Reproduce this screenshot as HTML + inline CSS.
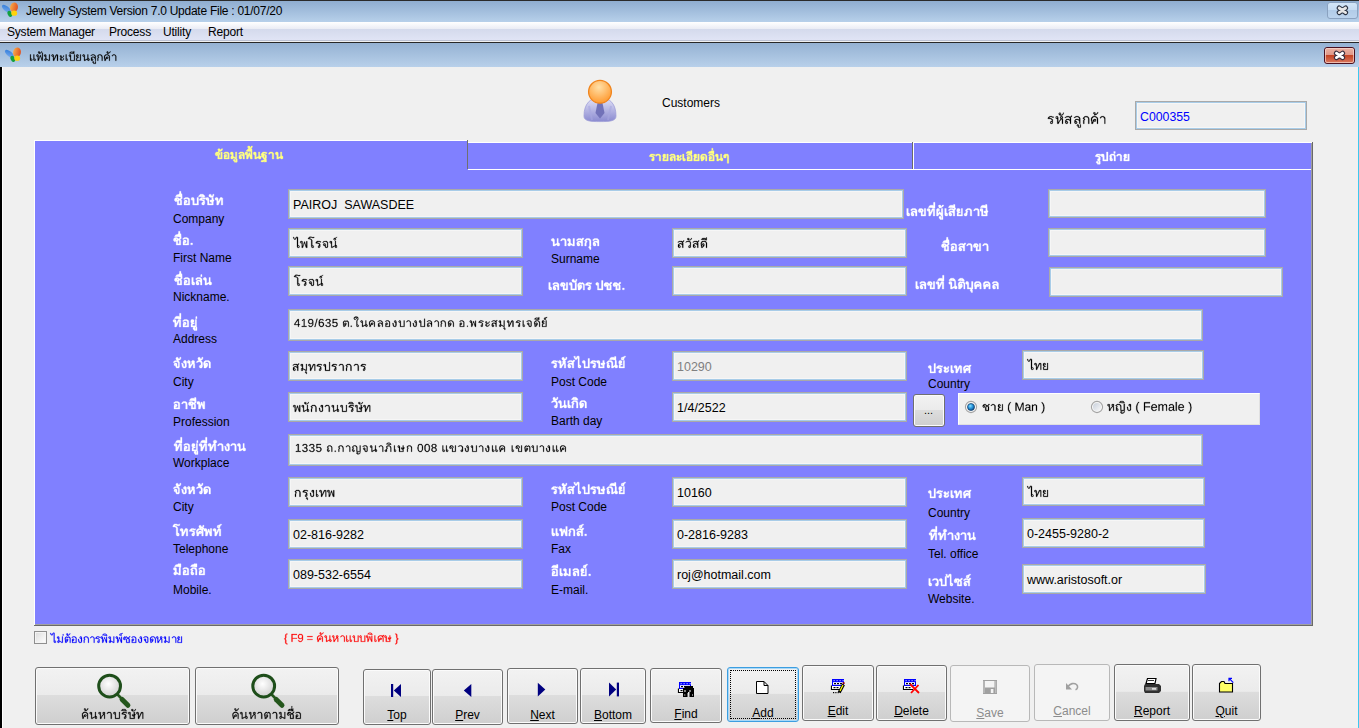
<!DOCTYPE html>
<html><head><meta charset="utf-8"><style>
*{box-sizing:border-box}
html,body{margin:0;padding:0}
body{width:1359px;height:728px;overflow:hidden;position:relative;background:#f0f0f0;font-family:"Liberation Sans",sans-serif;font-size:12px;color:#000}
.a{position:absolute;white-space:nowrap;line-height:20px}
.th{color:#fff;font-weight:bold;font-size:13px}
.en{font-size:12px}
.in{position:absolute;background:#f0f0f0;border:1px solid #a9a9a9;box-shadow:inset 0 0 0 1px #a8cce8,inset 0 0 0 2px #f6f6f6}
.it{position:absolute;white-space:nowrap;line-height:20px;font-size:12.5px}
.btn{position:absolute;border:1px solid #707070;border-radius:3px;background:linear-gradient(#f2f2f2 0,#ebebeb 48%,#dddddd 49%,#cfcfcf 100%);box-shadow:inset 0 0 0 1px #fbfbfb}
.bl{position:absolute;white-space:nowrap;line-height:20px;font-size:12px;text-align:center}
.bt{font-size:12.5px}
.u{text-decoration:underline}
</style></head><body>
<div style="position:absolute;left:0px;top:0px;width:1359px;height:1px;background:#2a2a2a"></div>
<div style="position:absolute;left:0px;top:1px;width:1359px;height:21px;background:linear-gradient(#8fadd0,#b7d0ea)"></div>
<div class="a a" style="left:26px;top:1px;font-size:12px;letter-spacing:-0.26px">Jewelry System Version 7.0 Update File : 01/07/20</div>
<div style="position:absolute;left:0px;top:22px;width:1359px;height:18px;background:linear-gradient(#ffffff 0px,#eaecf5 7px,#d4daec 7px,#e0e4f5 18px)"></div>
<div style="position:absolute;left:0px;top:40px;width:1359px;height:1px;background:#bcc2d4"></div>
<div style="position:absolute;left:0px;top:41px;width:1359px;height:1px;background:#f0f0f0"></div>
<div class="a a" style="left:7px;top:22px;font-size:12px;letter-spacing:-0.2px">System Manager</div>
<div class="a a" style="left:109px;top:22px;font-size:12px;letter-spacing:-0.2px">Process</div>
<div class="a a" style="left:163px;top:22px;font-size:12px;letter-spacing:-0.2px">Utility</div>
<div class="a a" style="left:208px;top:22px;font-size:12px;letter-spacing:-0.2px">Report</div>
<div style="position:absolute;left:0px;top:42px;width:1359px;height:1px;background:#282828"></div>
<div style="position:absolute;left:0px;top:43px;width:1359px;height:24px;background:linear-gradient(#95b2d3,#b8d0ea)"></div>
<svg style="position:absolute;left:29.25px;top:48.0px;overflow:visible" width="1" height="1"><path transform="scale(.25)" fill="#000" stroke="#000" stroke-width="0.9" stroke-linejoin="round" fill-rule="evenodd" d="M254 55 254 58 258 61 258 63 267 63 267 54 264 54 264 61 263 62 260 60 260 55 259 54 255 54ZM255 56 257 55 258 58 256 59ZM124 47 128 50 134 50 139 46 140 41 138 41 137 45 133 48 130 47 131 44 129 41 125 41 124 42ZM125 44 127 42 129 45 127 46ZM124 36 128 39 134 39 139 35 140 30 138 30 137 34 133 37 130 36 131 33 129 30 125 30 124 31ZM125 33 127 31 129 32 128 35ZM335 27 331 32 333 33 339 28 343 29 345 31 346 34 346 51 349 51 349 33 348 30 343 26 337 26ZM305 27 301 31 301 34 300 35 301 43 302 44 302 51 307 51 307 48 310 42 311 43 315 43 317 40 317 37 315 35 311 35 308 37 306 43 305 44 304 43 304 33 308 29 311 28 316 29 320 34 320 51 323 51 323 33 321 29 316 26 307 26ZM311 38 314 37 315 40 312 41ZM276 28 273 32 273 33 277 36 274 40 274 51 277 51 277 41 280 37 277 32 280 29 283 28 284 29 287 29 290 32 290 36 291 37 291 51 294 51 294 35 292 29 287 26 280 26ZM249 28 247 30 247 32 252 29 257 28 260 29 263 32 264 36 263 37 259 35 253 35 248 39 248 49 250 51 256 50 257 47 255 43 252 43 251 40 253 38 257 37 262 40 264 45 264 51 267 51 267 34 265 29 260 26 253 26ZM251 46 254 45 255 48 252 49ZM216 26 214 29 214 31 216 34 219 34 220 35 220 51 224 51 232 46 234 47 234 49 236 51 240 51 242 48 242 45 241 43 237 40 237 26 234 26 234 42 225 47 223 46 223 29 221 26ZM238 44 240 47 238 49 237 48 237 45ZM216 29 219 28 220 31 217 32ZM191 26 189 29 189 35 192 39 189 42 189 51 207 51 207 26 204 26 204 48 203 49 194 49 192 47 192 43 195 40 198 40 199 38 196 38 192 35 198 33 198 28 196 26ZM192 30 194 28 196 29 195 32ZM162 26 159 30 161 34 164 34 165 35 165 51 183 51 183 26 180 26 180 48 179 49 170 49 168 47 168 28 166 26ZM161 30 163 28 166 30 164 32ZM147 26 147 49 149 51 153 51 155 49 155 45 154 43 151 43 150 42 150 26ZM150 45 152 44 154 46 154 48 151 49 150 48ZM92 26 90 29 90 31 92 34 95 34 96 35 96 51 100 51 101 50 102 46 106 39 106 37 111 29 112 30 112 51 116 51 116 30 114 26 109 26 107 28 100 44 99 43 99 29 98 27 96 26ZM92 30 94 28 96 29 95 32 93 32ZM61 27 60 30 61 33 66 35 66 41 62 44 62 49 64 51 68 51 69 50 69 47 71 46 79 51 83 51 83 26 80 26 80 47 79 48 69 42 69 28 67 26ZM65 44 66 45 66 48 65 49 64 48 64 45ZM62 30 64 28 66 29 65 32ZM18 26 18 48 20 51 24 51 26 50 27 46 25 43 22 43 21 42 21 26ZM23 44 25 46 24 49 21 48 21 46ZM4 26 4 48 5 50 7 51 11 51 13 49 13 45 11 43 8 43 7 42 7 26ZM9 44 11 45 11 48 10 49 7 48 7 46ZM55 19 52 19 52 42 51 43 46 28 44 29 41 40 39 42 38 41 38 28 36 26 32 26 30 28 30 33 35 35 35 51 39 51 40 50 41 44 45 34 47 37 51 51 55 51ZM32 29 34 28 36 31 33 32ZM310 17 311 19 314 20 312 23 316 23 321 21 326 16 326 14 324 14 323 16 318 20 316 14 312 14ZM312 16 314 15 315 17 313 18ZM36 17 37 19 40 20 38 23 42 23 47 21 52 16 52 14 50 14 49 16 44 20 42 14 38 14ZM38 16 40 15 41 17 39 18ZM181 13 178 13 178 16 177 17 174 15 168 15 164 17 161 21 181 23ZM166 19 169 17 173 17 177 20 175 21 174 20 167 20Z"/></svg>
<div style="position:absolute;left:0px;top:67px;width:2px;height:661px;background:#000"></div>
<div style="position:absolute;left:2px;top:67px;width:1px;height:661px;background:#fff"></div>
<div style="position:absolute;left:1358px;top:67px;width:1px;height:661px;background:#3cc8f0"></div>
<div class="a a" style="left:662px;top:93px;font-size:12px">Customers</div>
<svg style="position:absolute;left:1047.25px;top:109.0px;overflow:visible" width="1" height="1"><path transform="scale(.25)" fill="#000" stroke="#000" stroke-width="0.9" stroke-linejoin="round" fill-rule="evenodd" d="M120 63 119 67 124 70 124 74 135 74 135 62 132 62 132 71 131 72 128 72 127 71 127 64 125 62 121 62ZM121 65 123 64 124 67 122 68ZM215 31 213 33 212 37 215 37 215 36 220 32 224 32 229 36 229 39 230 40 230 59 233 59 233 36 231 32 226 29 219 29ZM181 31 178 34 176 39 176 45 178 50 178 59 184 59 186 50 187 49 189 50 194 50 196 47 196 42 194 40 189 40 186 42 184 45 183 51 182 52 181 51 180 39 185 33 188 32 192 32 198 35 200 39 200 59 204 59 204 39 202 34 195 29 185 29ZM189 44 190 43 193 43 194 46 193 47 190 47ZM148 31 143 38 148 41 145 46 145 59 149 59 149 46 152 42 151 39 150 39 148 36 154 32 161 33 164 36 165 39 165 59 169 59 169 39 166 32 161 29 153 29ZM110 32 108 34 109 36 118 32 122 32 125 33 129 38 129 42 128 43 124 40 116 40 114 41 110 46 110 56 113 59 118 59 120 57 121 54 120 51 118 49 115 49 114 46 118 43 122 43 125 44 129 49 129 59 133 59 133 38 131 33 125 29 116 29ZM113 54 115 52 118 53 118 55 116 57ZM36 30 35 31 35 37 37 39 40 39 41 40 41 59 47 59 47 57 51 49 58 41 60 42 60 59 64 59 64 42 62 39 64 34 63 31 61 29 56 29 54 30 53 32 53 37 55 39 46 52 45 51 45 34 44 31 42 29ZM56 33 59 32 61 35 59 37 57 37 56 36ZM40 31 42 34 39 37 37 35 37 33ZM11 29 5 33 3 39 14 40 19 43 20 48 14 50 13 56 14 58 16 59 21 59 23 56 23 42 20 39 14 37 10 37 9 35 13 32 18 32 21 34 27 34 27 31 23 31 19 29ZM19 51 21 54 18 57 16 55 16 53ZM100 27 96 27 93 32 88 29 79 29 71 34 72 36 78 33 85 32 88 33 92 38 92 42 91 43 87 40 80 40 77 41 73 46 73 56 76 59 81 59 84 55 83 51 81 49 78 49 77 48 77 46 82 43 88 44 92 49 92 59 96 59 96 38 95 37 95 34 99 31ZM76 54 78 52 81 53 81 55 79 57ZM47 21 48 23 52 26 60 26 65 22 67 15 64 15 64 18 60 23 55 23 54 22 56 20 54 15 49 15 47 17ZM49 20 50 17 52 17 54 19 52 21ZM188 25 192 25 199 22 203 18 205 13 202 13 200 17 195 21 193 20 194 19 193 14 187 13 185 17 187 20 190 21 190 22 188 23ZM187 16 190 15 191 17 189 19Z"/></svg>
<div class="in" style="left:1135px;top:101px;width:172px;height:29px"></div>
<div class="a a" style="left:1140px;top:107px;font-size:12.3px;color:#0000ff">C000355</div>
<div style="position:absolute;left:34px;top:140px;width:434px;height:1px;background:#fff"></div>
<div style="position:absolute;left:34px;top:140px;width:1px;height:485px;background:#fff"></div>
<div style="position:absolute;left:35px;top:141px;width:1276px;height:483px;background:#8080ff"></div>
<div style="position:absolute;left:1311px;top:143px;width:1px;height:481px;background:#a0a0a0"></div>
<div style="position:absolute;left:1312px;top:142px;width:1px;height:484px;background:#696969"></div>
<div style="position:absolute;left:35px;top:624px;width:1277px;height:1px;background:#a0a0a0"></div>
<div style="position:absolute;left:34px;top:625px;width:1279px;height:1px;background:#696969"></div>
<div style="position:absolute;left:467px;top:140px;width:846px;height:2px;background:#f0f0f0"></div>
<div style="position:absolute;left:467px;top:140px;width:1px;height:29px;background:#707070"></div>
<div style="position:absolute;left:468px;top:142px;width:844px;height:1px;background:#fff"></div>
<div style="position:absolute;left:468px;top:169px;width:843px;height:1px;background:#fff"></div>
<div style="position:absolute;left:912px;top:142px;width:1px;height:27px;background:#6a6a6a"></div>
<div style="position:absolute;left:913px;top:143px;width:1px;height:26px;background:#fff"></div>
<svg style="position:absolute;left:215.25px;top:145.0px;overflow:visible" width="1" height="1"><path transform="scale(.25)" fill="#ffff80" stroke="#ffff80" stroke-width="1.2" stroke-linejoin="round" fill-rule="evenodd" d="M244 28 241 32 241 36 244 39 247 40 247 56 253 56 259 52 261 52 264 56 270 56 272 53 272 47 271 45 267 42 267 28 262 28 262 45 255 49 253 48 253 33 252 30 250 28ZM218 29 214 34 214 36 215 37 218 37 222 33 227 33 229 36 229 56 235 56 235 35 234 32 229 28 220 28ZM154 30 153 36 156 39 159 40 159 56 165 56 171 52 173 52 176 56 182 56 184 53 184 47 185 46 187 49 190 49 192 54 196 56 197 58 192 61 187 61 184 64 184 66 186 68 192 68 194 66 196 69 197 69 199 66 201 68 206 68 206 58 204 56 206 52 206 41 203 38 196 36 194 34 195 33 200 33 204 35 207 35 208 29 207 30 201 28 193 28 190 29 185 35 184 38 186 41 184 47 183 45 179 42 179 28 174 28 174 45 167 49 165 48 165 33 164 30 162 28 156 28ZM197 41 200 43 200 50 199 51 197 50 197 44 196 43ZM94 33 96 37 103 33 109 33 112 36 111 38 109 37 104 37 99 39 96 43 96 53 99 56 104 56 107 54 107 47 102 44 106 42 109 43 112 46 112 56 118 56 118 36 115 30 111 28 101 28ZM101 51 102 50 103 51 102 52ZM64 28 62 30 61 34 62 37 67 40 67 43 64 45 63 47 63 54 65 56 71 56 72 54 75 52 84 57 84 64 83 65 82 64 82 59 80 57 75 57 73 59 73 63 77 66 78 69 88 69 89 68 89 57 87 56 87 28 82 28 82 49 81 50 73 45 73 32 70 28ZM37 30 34 33 34 34 37 36 42 33 48 33 51 36 51 50 50 51 42 51 41 50 42 48 45 48 47 46 47 39 44 37 40 37 38 38 36 41 36 56 57 56 57 34 53 29 50 28 41 28ZM41 43 42 42 43 43 42 44ZM13 15 11 18 12 22 14 23 13 24 13 27 12 28 6 28 2 31 1 33 1 40 4 43 9 43 10 42 11 43 11 56 29 56 29 28 23 28 23 50 22 51 18 51 17 50 17 41 18 39 20 38 20 34 19 31 15 28 26 24 29 21 31 15 26 15 22 20 19 15ZM6 38 7 37 8 38 7 39ZM13 34 14 35 13 38 12 37ZM11 34 12 33 13 34 12 35ZM133 4 131 5 131 11 133 13 133 16 128 19 124 25 128 25 129 26 141 26 144 28 143 29 143 38 142 39 141 38 139 31 136 30 132 40 131 39 131 31 130 29 128 28 123 28 120 30 120 37 122 39 125 39 126 40 126 56 132 56 137 41 142 56 149 56 148 15 145 15 144 14 147 12 149 9 150 4 145 4 144 7 141 10 140 9 140 6 138 4ZM124 34 125 33 126 34 125 35ZM134 8 135 7 136 8 135 9Z"/></svg>
<svg style="position:absolute;left:648.5px;top:147.0px;overflow:visible" width="1" height="1"><path transform="scale(.25)" fill="#ffff80" stroke="#ffff80" stroke-width="1.2" stroke-linejoin="round" fill-rule="evenodd" d="M113 32 111 34 111 39 112 41 115 43 111 45 111 51 112 53 115 55 123 55 127 53 129 51 130 44 125 44 124 43 129 39 130 32 125 32 125 36 122 39 120 38 120 34 118 32ZM124 43 125 44 125 48 121 51 119 44 120 43ZM268 28 265 32 265 36 268 39 271 40 271 56 277 56 283 52 285 52 288 56 294 56 296 53 296 47 295 45 291 42 291 28 286 28 286 45 279 49 277 48 277 33 276 30 274 28ZM211 29 206 35 206 44 208 50 208 56 214 56 216 55 220 51 222 47 222 40 221 38 219 37 213 38 212 36 216 33 222 33 225 35 226 37 226 56 232 56 232 37 230 32 227 29 224 28 214 28ZM213 48 214 47 215 48 214 49ZM182 28 179 32 179 39 181 42 179 46 179 56 201 56 201 28 195 28 195 50 194 51 186 51 185 50 185 46 191 44 191 40 188 39 190 38 191 36 191 31 190 29 188 28ZM134 28 134 49 135 50 135 53 136 55 138 56 144 56 146 54 146 48 140 44 140 28ZM140 51 141 50 142 51 141 52ZM82 33 84 37 91 33 97 33 100 36 99 38 97 37 92 37 87 39 84 43 84 53 87 56 92 56 95 54 95 47 90 44 94 42 97 43 100 46 100 56 106 56 106 36 103 30 99 28 89 28ZM89 51 90 50 91 51 90 52ZM58 28 55 32 55 39 57 42 55 46 55 56 77 56 77 28 71 28 71 50 70 51 62 51 61 50 61 46 67 44 67 40 64 39 66 38 67 36 67 31 66 29 64 28ZM30 29 26 34 26 36 27 37 30 37 34 33 39 33 41 36 41 56 47 56 47 35 46 32 41 28 32 28ZM8 28 3 32 1 38 12 40 16 43 15 46 12 46 11 47 10 53 11 55 13 56 18 56 21 52 21 40 18 37 10 34 11 33 15 33 16 34 23 35 25 32 25 29 21 30 17 28ZM305 27 299 32 298 34 298 41 299 43 301 44 306 44 308 43 309 41 309 36 311 34 313 35 313 65 319 65 319 35 317 30 314 28 307 29ZM303 39 304 38 305 39 304 40ZM249 15 248 17 244 17 240 19 236 25 240 25 241 26 253 26 254 27 253 28 245 28 241 30 238 34 241 36 246 33 252 33 255 36 255 50 254 51 246 51 245 50 246 48 249 48 251 46 251 39 248 37 244 37 242 38 240 41 240 56 261 56 261 34 257 29 254 28 255 27 260 28 260 15ZM245 43 246 42 247 43 246 44ZM171 14 167 14 167 17 166 18 164 17 155 17 149 22 148 26 161 26 162 27 153 30 150 33 151 35 153 36 158 33 164 33 167 36 167 50 166 51 158 51 157 50 158 48 161 48 163 46 163 39 162 38 156 37 153 39 152 41 152 56 173 56 173 34 169 29 172 28 172 15ZM157 43 158 42 159 43 158 44ZM166 28 167 27 169 28 168 29ZM251 5 251 13 256 13 256 5Z"/></svg>
<svg style="position:absolute;left:1095.0px;top:147.0px;overflow:visible" width="1" height="1"><path transform="scale(.25)" fill="#ffffff" stroke="#ffffff" stroke-width="1.2" stroke-linejoin="round" fill-rule="evenodd" d="M118 28 115 32 115 39 117 42 115 46 115 56 137 56 137 28 131 28 131 50 130 51 122 51 121 50 121 46 127 44 127 40 124 39 126 38 127 36 127 31 126 29 124 28ZM90 29 86 34 86 36 87 37 90 37 94 33 99 33 101 36 101 56 107 56 107 35 106 32 101 28 92 28ZM62 30 57 37 61 39 59 43 59 52 62 56 68 56 70 54 71 49 68 45 65 44 68 40 65 35 68 33 73 33 76 36 76 56 82 56 82 35 79 30 75 28 66 28ZM64 51 65 50 66 51 65 52ZM52 20 46 20 46 50 45 51 38 51 37 50 37 34 36 33 36 30 34 28 28 28 23 30 17 28 8 28 3 32 1 38 12 40 16 43 16 45 15 46 12 46 10 49 10 53 11 55 13 56 12 57 7 57 5 59 5 63 9 66 10 69 20 69 21 68 21 57 18 56 21 52 21 40 18 37 11 35 10 34 11 33 15 33 20 35 23 35 24 34 26 38 31 40 31 56 52 56ZM13 56 16 57 16 64 15 65 14 64 14 59 12 57ZM75 18 75 25 76 26 80 26 81 25 81 18Z"/></svg>
<svg style="position:absolute;left:173.5px;top:191.0px;overflow:visible" width="1" height="1"><path transform="scale(.25)" fill="#fff" stroke="#fff" stroke-width="1.2" stroke-linejoin="round" fill-rule="evenodd" d="M165 28 164 30 165 35 167 37 170 37 171 38 171 56 177 56 188 33 189 34 189 56 195 56 195 29 192 26 186 26 184 28 178 41 176 37 177 35 176 29 173 26 168 26ZM169 32 170 31 171 32 170 33ZM70 27 69 29 69 35 71 37 74 37 75 38 75 56 98 56 98 26 92 26 92 50 91 51 82 51 81 50 81 32 79 27 77 26 72 26ZM73 32 74 31 75 32 74 33ZM42 28 38 32 41 35 43 33 48 31 53 31 56 33 57 35 57 50 56 51 47 51 46 50 47 47 50 47 52 45 53 41 51 37 49 36 44 36 41 39 41 42 40 43 40 56 63 56 63 33 61 29 55 26 46 26ZM46 41 47 40 48 41 47 42ZM160 13 156 13 155 14 155 17 152 20 150 20 149 19 150 18 149 15 145 13 141 14 139 18 140 19 140 22 142 24 148 26 150 25 151 26 151 35 150 36 146 36 144 37 143 39 145 44 151 46 151 50 150 51 141 51 140 50 140 31 137 26 131 26 129 27 128 29 127 27 123 28 118 26 110 26 103 31 101 37 110 38 116 40 117 41 117 44 112 46 111 48 111 53 114 56 120 56 123 50 123 40 121 37 118 35 113 34 112 32 113 31 116 31 120 33 125 33 127 29 128 30 128 35 134 39 134 56 157 56 157 43 160 40 160 37 161 36 157 34 157 26 154 26 153 25 157 23 159 20ZM116 50 117 49 118 51 117 52ZM132 32 133 31 134 32 133 33ZM98 21 98 23 113 23 114 24 124 25 122 18 116 13 106 13 104 14ZM110 18 111 17 113 18 112 19ZM27 1 23 1 22 2 22 10 20 11 18 14 11 15 6 22 7 23 21 23 22 24 26 24 27 25 27 28 22 31 16 26 8 26 3 30 2 33 2 38 5 42 11 42 12 41 13 42 13 56 31 56 31 38 28 34 33 30 32 11 29 11 28 10 28 2ZM22 37 25 39 25 50 24 51 20 51 19 50 19 40ZM7 36 8 35 9 37 8 38ZM12 32 14 31 16 33 16 35 15 36Z"/></svg>
<svg style="position:absolute;left:173.25px;top:230.5px;overflow:visible" width="1" height="1"><path transform="scale(.25)" fill="#fff" stroke="#fff" stroke-width="1.2" stroke-linejoin="round" fill-rule="evenodd" d="M71 48 71 55 78 55 78 48ZM42 28 38 32 41 35 43 33 48 31 53 31 56 33 57 35 57 50 56 51 47 51 46 50 47 47 50 47 52 45 53 41 51 37 49 36 44 36 41 39 41 42 40 43 40 56 63 56 63 33 61 29 55 26 46 26ZM46 41 47 40 48 41 47 42ZM27 1 23 1 22 2 22 10 20 11 18 14 11 15 6 22 7 23 21 23 22 24 26 24 27 25 27 28 22 31 16 26 8 26 3 30 2 33 2 38 5 42 11 42 12 41 13 42 13 56 31 56 31 38 28 34 33 30 32 11 29 11 28 10 28 2ZM22 37 25 39 25 50 24 51 20 51 19 50 19 40ZM7 36 8 35 9 37 8 38ZM12 32 14 31 16 33 16 35 15 36Z"/></svg>
<svg style="position:absolute;left:173.5px;top:271.0px;overflow:visible" width="1" height="1"><path transform="scale(.25)" fill="#fff" stroke="#fff" stroke-width="1.2" stroke-linejoin="round" fill-rule="evenodd" d="M118 28 117 31 118 35 120 37 123 37 124 38 124 56 130 56 139 51 142 56 148 56 150 54 151 48 150 46 145 42 145 26 140 26 140 44 138 46 131 49 130 48 130 32 128 27 126 26 121 26ZM122 32 123 31 124 32 123 33ZM90 28 87 31 87 33 89 36 96 31 101 31 106 35 105 37 103 36 95 36 90 39 88 44 88 50 90 55 92 56 98 56 100 54 100 47 98 45 96 45 95 43 97 41 101 41 103 42 106 46 106 56 112 56 112 34 110 30 107 27 104 26 94 26ZM94 50 95 49 96 51 95 52ZM71 26 71 52 74 56 80 56 82 55 83 53 83 48 81 45 77 43 77 26ZM77 50 78 49 79 51 78 52ZM42 28 38 32 41 35 43 33 48 31 53 31 56 33 57 35 57 50 56 51 47 51 46 50 47 47 50 47 52 45 53 41 51 37 49 36 44 36 41 39 41 42 40 43 40 56 63 56 63 33 61 29 55 26 46 26ZM46 41 47 40 48 41 47 42ZM108 14 107 15 107 23 112 23 112 15 111 14ZM27 1 23 1 22 2 22 10 20 11 18 14 11 15 6 22 7 23 21 23 22 24 26 24 27 25 27 28 22 31 16 26 8 26 3 30 2 33 2 38 5 42 11 42 12 41 13 42 13 56 31 56 31 38 28 34 33 30 32 11 29 11 28 10 28 2ZM22 37 25 39 25 50 24 51 20 51 19 50 19 40ZM7 36 8 35 9 37 8 38ZM12 32 14 31 16 33 16 35 15 36Z"/></svg>
<svg style="position:absolute;left:173.25px;top:313.0px;overflow:visible" width="1" height="1"><path transform="scale(.25)" fill="#fff" stroke="#fff" stroke-width="1.2" stroke-linejoin="round" fill-rule="evenodd" d="M73 27 71 31 71 37 74 41 72 44 72 56 81 56 82 57 80 59 80 65 84 67 84 70 96 70 96 57 94 56 94 26 89 26 89 50 88 51 79 51 78 50 78 45 85 43 85 39 80 39 79 38 84 35 84 29 81 26 75 26ZM88 56 91 57 91 65 90 66 89 65 89 60 87 57ZM42 28 38 32 41 35 43 33 48 31 53 31 56 33 57 35 57 50 56 51 47 51 46 50 47 47 50 47 52 45 53 41 51 37 49 36 44 36 41 39 41 42 40 43 40 56 63 56 63 33 61 29 55 26 46 26ZM46 41 47 40 48 41 47 42ZM92 14 91 15 91 23 96 23 96 15 95 14ZM31 1 27 1 26 2 26 13 25 14 23 13 14 13 10 15 6 21 6 23 21 23 22 24 28 24 29 25 28 26 22 26 20 28 14 41 12 37 13 35 12 29 9 26 4 26 2 27 0 30 1 35 3 37 6 37 7 38 7 56 13 56 24 33 25 34 25 56 31 56 31 29 28 26 29 25 32 25 32 2ZM5 32 6 31 7 32 6 33Z"/></svg>
<svg style="position:absolute;left:173.0px;top:354.0px;overflow:visible" width="1" height="1"><path transform="scale(.25)" fill="#fff" stroke="#fff" stroke-width="1.2" stroke-linejoin="round" fill-rule="evenodd" d="M125 29 122 36 122 41 124 48 124 56 131 56 135 53 139 47 139 43 140 42 139 41 139 38 137 36 131 36 129 38 128 37 129 34 134 31 139 31 144 35 144 56 150 56 150 34 148 30 142 26 130 26ZM132 42 133 41 135 42 134 43ZM45 26 42 29 42 35 44 37 47 37 48 38 48 49 46 51 44 51 42 48 41 39 36 36 34 36 34 38 35 39 36 48 38 53 42 56 49 56 51 55 54 51 54 30 51 26ZM46 32 47 31 48 32 47 33ZM60 26 57 30 57 33 59 37 62 37 63 38 63 56 70 56 73 49 80 39 81 40 81 56 87 56 87 39 85 36 86 35 86 28 83 26 77 26 74 30 74 33 76 36 70 44 69 43 69 30 68 28 63 25ZM79 32 80 31 81 32 80 33ZM62 31 63 30 64 31 63 32ZM104 13 101 14 99 18 100 19 100 22 104 25 97 28 93 33 96 35 100 32 108 31 112 36 112 44 111 45 108 45 106 47 105 51 107 55 109 56 114 56 116 55 118 50 118 35 116 30 111 26 117 23 120 17 120 13 116 13 115 14 115 17 112 20 109 19 110 18 108 14ZM110 50 111 49 112 50 111 51ZM32 13 28 13 27 14 27 17 24 20 21 19 22 18 20 14 17 13 13 14 11 18 12 19 12 22 16 25 15 26 7 27 1 32 1 33 4 35 12 31 16 31 20 34 21 37 21 48 19 51 18 51 16 48 16 39 15 37 13 36 8 36 6 37 4 40 5 46 10 47 12 54 15 56 22 56 24 55 26 52 26 32 21 26 29 23 32 17ZM9 42 10 41 11 42 10 43Z"/></svg>
<svg style="position:absolute;left:173.0px;top:394.75px;overflow:visible" width="1" height="1"><path transform="scale(.25)" fill="#fff" stroke="#fff" stroke-width="1.2" stroke-linejoin="round" fill-rule="evenodd" d="M97 27 96 29 96 35 98 37 101 37 102 38 102 56 109 56 112 47 112 44 114 40 116 41 120 55 121 56 127 56 127 26 121 26 121 38 120 39 116 28 113 28 109 39 108 38 108 30 105 26 99 26ZM41 26 36 30 34 35 38 36 43 31 49 32 51 35 51 56 57 56 57 35 56 34 56 31 54 28 50 26ZM6 28 2 32 5 35 7 33 12 31 17 31 20 33 21 35 21 50 20 51 11 51 10 50 11 47 14 47 16 45 17 41 15 37 13 36 8 36 5 39 5 42 4 43 4 56 27 56 27 33 25 29 19 26 10 26ZM10 41 11 40 12 41 11 42ZM92 10 86 10 86 13 85 14 83 13 74 13 70 15 66 21 66 23 81 23 87 25 87 28 83 31 76 26 68 26 63 30 62 33 62 38 65 42 71 42 72 41 73 42 73 56 91 56 91 38 88 34 93 30ZM82 37 85 39 85 50 84 51 80 51 79 50 79 40ZM67 36 68 35 69 37 68 38ZM72 32 74 31 76 33 76 35 75 36Z"/></svg>
<svg style="position:absolute;left:173.5px;top:437.0px;overflow:visible" width="1" height="1"><path transform="scale(.25)" fill="#fff" stroke="#fff" stroke-width="1.2" stroke-linejoin="round" fill-rule="evenodd" d="M254 28 253 31 254 35 256 37 259 37 260 38 260 56 266 56 275 51 278 56 284 56 286 54 287 48 286 46 281 42 281 26 276 26 276 44 274 46 267 49 266 48 266 32 264 27 262 26 257 26ZM258 32 259 31 260 32 259 33ZM233 26 228 30 226 35 230 36 235 31 241 32 243 35 243 56 249 56 249 35 248 34 248 31 246 28 242 26ZM213 26 210 29 210 35 212 37 215 37 216 38 216 49 214 51 212 51 210 48 209 39 204 36 202 36 202 38 203 39 204 48 206 53 210 56 217 56 219 55 222 51 222 30 219 26ZM214 32 215 31 216 32 215 33ZM181 26 176 30 174 35 178 36 183 31 189 32 191 35 191 56 197 56 197 35 196 34 196 31 194 28 190 26ZM73 27 71 31 71 37 74 41 72 44 72 56 81 56 82 57 80 59 80 65 84 67 84 70 96 70 96 57 94 56 94 26 89 26 89 50 88 51 79 51 78 50 78 45 85 43 85 39 80 39 79 38 84 35 84 29 81 26 75 26ZM88 56 91 57 91 65 90 66 89 65 89 60 87 57ZM42 28 38 32 41 35 43 33 48 31 53 31 56 33 57 35 57 50 56 51 47 51 46 50 47 47 50 47 52 45 53 41 51 37 49 36 44 36 41 39 41 42 40 43 40 56 63 56 63 33 61 29 55 26 46 26ZM46 41 47 40 48 41 47 42ZM92 14 91 15 91 23 96 23 96 15 95 14ZM169 14 167 13 161 13 159 14 157 17 158 23 161 25 156 28 150 41 148 37 149 35 148 29 145 26 140 26 137 28 136 30 137 35 139 37 142 37 143 38 143 56 149 56 160 33 161 34 161 56 167 56 167 29 164 26 169 24 171 20 171 17ZM141 32 142 31 143 32 142 33ZM163 19 164 18 165 19 164 20ZM131 1 127 1 126 2 126 13 125 14 123 13 114 13 110 15 106 21 106 23 121 23 122 24 128 24 129 25 128 26 122 26 120 28 114 41 112 37 113 35 112 29 109 26 104 26 102 27 100 30 101 35 103 37 106 37 107 38 107 56 113 56 124 33 125 34 125 56 131 56 131 29 128 26 129 25 132 25 132 2ZM105 32 106 31 107 32 106 33ZM31 1 27 1 26 2 26 13 25 14 23 13 14 13 10 15 6 21 6 23 21 23 22 24 28 24 29 25 28 26 22 26 20 28 14 41 12 37 13 35 12 29 9 26 4 26 2 27 0 30 1 35 3 37 6 37 7 38 7 56 13 56 24 33 25 34 25 56 31 56 31 29 28 26 29 25 32 25 32 2ZM5 32 6 31 7 32 6 33Z"/></svg>
<svg style="position:absolute;left:173.0px;top:480.0px;overflow:visible" width="1" height="1"><path transform="scale(.25)" fill="#fff" stroke="#fff" stroke-width="1.2" stroke-linejoin="round" fill-rule="evenodd" d="M125 29 122 36 122 41 124 48 124 56 131 56 135 53 139 47 139 43 140 42 139 41 139 38 137 36 131 36 129 38 128 37 129 34 134 31 139 31 144 35 144 56 150 56 150 34 148 30 142 26 130 26ZM132 42 133 41 135 42 134 43ZM45 26 42 29 42 35 44 37 47 37 48 38 48 49 46 51 44 51 42 48 41 39 36 36 34 36 34 38 35 39 36 48 38 53 42 56 49 56 51 55 54 51 54 30 51 26ZM46 32 47 31 48 32 47 33ZM60 26 57 30 57 33 59 37 62 37 63 38 63 56 70 56 73 49 80 39 81 40 81 56 87 56 87 39 85 36 86 35 86 28 83 26 77 26 74 30 74 33 76 36 70 44 69 43 69 30 68 28 63 25ZM79 32 80 31 81 32 80 33ZM62 31 63 30 64 31 63 32ZM104 13 101 14 99 18 100 19 100 22 104 25 97 28 93 33 96 35 100 32 108 31 112 36 112 44 111 45 108 45 106 47 105 51 107 55 109 56 114 56 116 55 118 50 118 35 116 30 111 26 117 23 120 17 120 13 116 13 115 14 115 17 112 20 109 19 110 18 108 14ZM110 50 111 49 112 50 111 51ZM32 13 28 13 27 14 27 17 24 20 21 19 22 18 20 14 17 13 13 14 11 18 12 19 12 22 16 25 15 26 7 27 1 32 1 33 4 35 12 31 16 31 20 34 21 37 21 48 19 51 18 51 16 48 16 39 15 37 13 36 8 36 6 37 4 40 5 46 10 47 12 54 15 56 22 56 24 55 26 52 26 32 21 26 29 23 32 17ZM9 42 10 41 11 42 10 43Z"/></svg>
<svg style="position:absolute;left:173.25px;top:522.0px;overflow:visible" width="1" height="1"><path transform="scale(.25)" fill="#fff" stroke="#fff" stroke-width="1.2" stroke-linejoin="round" fill-rule="evenodd" d="M74 26 67 31 65 37 74 38 80 40 81 41 81 44 76 46 75 48 75 53 78 56 84 56 87 50 87 40 85 37 82 35 77 34 76 32 77 31 80 31 84 33 89 33 91 27 87 28 82 26ZM80 50 81 49 82 51 81 52ZM29 28 28 30 29 35 31 37 34 37 35 38 35 56 41 56 52 33 53 34 53 56 59 56 59 29 56 26 50 26 48 28 42 41 40 37 41 35 40 29 37 26 32 26ZM33 32 34 31 35 32 34 33ZM93 35 93 42 95 48 95 56 102 56 104 48 105 47 111 47 113 46 114 44 115 45 115 56 121 56 121 35 120 32 123 29 124 30 124 35 126 37 129 37 130 38 130 56 137 56 140 47 140 44 142 40 144 41 148 55 149 56 155 56 155 26 149 26 149 38 148 39 144 28 141 28 137 39 136 38 136 30 133 26 127 26 125 27 124 26 125 24 122 24 121 23 124 17 124 13 120 13 119 14 119 17 116 20 113 19 114 18 112 14 109 13 105 14 103 18 104 19 104 22 108 25 107 26 102 26 98 28ZM108 41 109 40 110 42 109 43ZM99 41 99 36 105 31 112 32 115 36 114 39 113 37 111 36 105 36 100 42ZM123 28 124 27 125 28 124 29ZM113 26 114 25 117 26 116 27ZM195 9 189 9 185 12 178 14 177 16 177 22 179 24 182 24 183 25 180 28 174 41 172 37 173 35 172 29 169 26 164 26 161 28 160 30 161 35 163 37 166 37 167 38 167 56 173 56 184 33 185 34 185 56 191 56 191 29 188 26 184 26 183 25 188 22 189 20 188 16 193 13ZM165 32 166 31 167 32 166 33ZM181 19 183 18 184 20 183 21ZM28 7 24 10 18 10 14 8 6 8 1 12 -1 19 2 20 8 20 10 21 13 25 13 52 16 56 22 56 24 55 25 53 25 48 23 45 19 43 19 25 18 22 15 18 9 16 8 14 9 13 12 13 17 15 24 15 27 13 27 8ZM19 50 20 49 21 51 20 52Z"/></svg>
<svg style="position:absolute;left:173.25px;top:561.0px;overflow:visible" width="1" height="1"><path transform="scale(.25)" fill="#fff" stroke="#fff" stroke-width="1.2" stroke-linejoin="round" fill-rule="evenodd" d="M106 28 102 32 105 35 107 33 112 31 117 31 120 33 121 35 121 50 120 51 111 51 110 50 111 47 114 47 116 45 117 41 115 37 113 36 108 36 105 39 105 42 104 43 104 56 127 56 127 33 125 29 119 26 110 26ZM110 41 111 40 112 41 111 42ZM75 28 69 36 74 38 71 46 72 53 75 56 81 56 83 54 84 49 81 45 78 44 78 42 81 38 77 34 81 31 85 31 87 32 90 36 90 56 96 56 96 35 94 30 89 26 79 26ZM77 50 78 49 79 51 78 52ZM42 28 38 32 41 35 43 33 48 31 53 31 56 33 57 35 57 50 56 51 47 51 46 50 47 47 50 47 52 45 53 41 51 37 49 36 44 36 41 39 41 42 40 43 40 56 63 56 63 33 61 29 55 26 46 26ZM46 41 47 40 48 41 47 42ZM70 22 71 23 85 23 86 24 96 25 96 11 84 11 82 14 75 15ZM32 11 20 11 18 14 11 15 6 22 7 23 21 23 28 25 27 26 24 26 24 49 23 50 14 44 14 31 13 28 10 26 5 26 2 28 2 35 4 37 7 37 8 38 8 43 3 47 3 52 6 56 11 56 13 55 15 51 24 56 30 56 30 26 32 25ZM6 32 7 31 8 32 7 33Z"/></svg>
<svg style="position:absolute;left:551.0px;top:231.75px;overflow:visible" width="1" height="1"><path transform="scale(.25)" fill="#fff" stroke="#fff" stroke-width="1.2" stroke-linejoin="round" fill-rule="evenodd" d="M170 28 167 31 167 33 169 36 176 31 181 31 186 35 185 37 183 36 175 36 170 39 168 44 168 50 170 55 172 56 178 56 180 54 180 47 178 45 176 45 175 43 177 41 181 41 183 42 186 46 186 56 192 56 192 34 190 30 187 27 184 26 174 26ZM174 50 175 49 176 51 175 52ZM143 26 139 28 133 36 138 38 135 46 135 56 141 56 141 44 145 39 141 34 145 31 151 32 154 36 154 56 151 59 151 64 155 67 155 70 160 70 160 60 158 57 160 56 160 35 158 30 153 26ZM66 28 66 35 68 37 71 37 72 38 72 43 67 47 67 52 70 56 75 56 77 55 79 51 88 56 94 56 94 26 88 26 88 49 87 50 78 44 78 31 77 28 74 26 69 26ZM70 32 71 31 72 32 71 33ZM45 26 40 30 38 35 42 36 47 31 53 32 55 35 55 56 61 56 61 35 60 34 60 31 58 28 54 26ZM2 28 1 31 2 35 4 37 7 37 8 38 8 56 14 56 23 51 26 56 32 56 34 54 35 48 34 46 29 42 29 26 24 26 24 44 22 46 15 49 14 48 14 32 12 27 10 26 5 26ZM6 32 7 31 8 32 7 33ZM131 24 125 24 125 26 123 28 119 26 109 26 102 31 102 33 104 36 107 33 112 31 116 31 121 35 120 37 119 36 110 36 106 38 103 44 103 49 104 50 104 53 107 56 113 56 115 54 116 51 115 47 110 43 112 41 116 41 120 44 121 46 121 56 127 56 127 34 126 33 129 31 131 27ZM109 50 110 49 111 51 110 52Z"/></svg>
<svg style="position:absolute;left:547.5px;top:275.75px;overflow:visible" width="1" height="1"><path transform="scale(.25)" fill="#fff" stroke="#fff" stroke-width="1.2" stroke-linejoin="round" fill-rule="evenodd" d="M298 48 298 55 305 55 305 48ZM158 26 151 31 149 37 158 38 164 40 165 41 165 44 160 46 159 48 159 53 162 56 168 56 171 50 171 40 169 37 166 35 161 34 160 32 161 31 164 31 168 33 173 33 175 27 171 28 166 26ZM164 50 165 49 166 51 165 52ZM124 27 120 31 118 37 119 39 119 45 120 46 120 56 127 56 131 53 135 47 136 44 135 38 133 36 128 36 127 37 125 36 128 32 131 34 134 34 136 32 138 32 140 34 141 37 141 56 146 56 146 33 145 31 139 26 136 26 133 28 130 26ZM129 42 130 41 131 42 130 43ZM124 37 125 36 126 38 125 39ZM53 27 49 33 49 38 52 42 58 42 59 41 60 42 60 56 79 56 79 26 73 26 73 50 72 51 67 51 66 50 66 41 70 36 68 29 63 26 55 26ZM54 36 55 35 56 37 55 38ZM59 32 61 31 64 35 62 37ZM22 28 19 31 19 33 21 36 28 31 33 31 38 35 37 37 35 36 27 36 22 39 20 44 20 50 22 55 24 56 30 56 32 54 32 47 30 45 28 45 27 43 29 41 33 41 35 42 38 46 38 56 44 56 44 34 42 30 39 27 36 26 26 26ZM26 50 27 49 28 51 27 52ZM3 26 3 52 6 56 12 56 14 55 15 53 15 48 13 45 9 43 9 26ZM9 50 10 49 11 51 10 52ZM291 25 285 25 285 28 281 31 274 26 266 26 261 30 260 33 260 38 263 42 269 42 270 41 271 42 271 56 289 56 289 38 286 34 291 30ZM280 37 283 39 283 50 282 51 278 51 277 50 277 40ZM265 36 266 35 267 37 266 38ZM270 32 272 31 274 33 274 35 273 36ZM255 25 249 25 249 28 245 31 238 26 230 26 225 30 224 33 224 38 227 42 233 42 234 41 235 42 235 56 253 56 253 38 250 34 255 30ZM244 37 247 39 247 50 246 51 242 51 241 50 241 40ZM229 36 230 35 231 37 230 38ZM234 32 236 31 238 33 238 35 237 36ZM220 18 214 18 214 50 213 51 204 51 203 50 203 29 200 26 195 26 192 28 191 30 192 36 198 38 198 56 220 56ZM196 32 197 31 198 32 197 33ZM97 14 95 18 96 19 96 22 100 25 103 25 104 26 107 25 108 26 108 50 107 51 98 51 97 50 97 32 95 27 93 26 88 26 86 27 85 29 85 35 87 37 90 37 91 38 91 56 114 56 114 26 110 26 109 25 113 23 115 20 116 13 112 13 111 14 111 17 108 20 105 19 106 18 104 14 101 13ZM89 32 90 31 91 32 90 33Z"/></svg>
<svg style="position:absolute;left:551.25px;top:354.0px;overflow:visible" width="1" height="1"><path transform="scale(.25)" fill="#fff" stroke="#fff" stroke-width="1.2" stroke-linejoin="round" fill-rule="evenodd" d="M273 27 271 31 271 37 274 41 272 44 272 56 294 56 294 26 289 26 289 50 288 51 279 51 278 50 278 45 285 43 285 39 280 39 279 38 284 35 284 29 281 26 275 26ZM158 33 157 37 166 38 173 41 173 44 172 45 169 45 167 48 167 53 170 56 176 56 179 50 179 40 177 37 174 35 169 34 168 32 169 31 172 31 176 33 181 33 183 29 184 30 184 35 190 39 190 56 213 56 213 43 216 40 216 37 217 36 213 34 213 26 207 26 207 35 206 36 202 36 200 37 199 39 201 44 207 46 207 50 206 51 197 51 196 50 196 31 193 26 187 26 185 27 184 29 183 27 179 28 174 26 166 26 162 28ZM172 50 173 49 174 51 173 52ZM188 32 189 31 190 32 189 33ZM10 26 3 31 1 37 10 38 16 40 17 41 17 44 12 46 11 48 11 53 14 56 20 56 23 50 23 40 21 37 18 35 13 34 12 32 13 31 16 31 20 33 25 33 27 27 23 28 18 26ZM16 50 17 49 18 51 17 52ZM95 24 89 24 89 26 87 28 83 26 73 26 66 31 66 33 68 36 71 33 76 31 80 31 85 35 84 37 83 36 74 36 70 38 67 44 67 49 68 50 68 53 71 56 77 56 79 54 80 51 79 47 74 43 76 41 80 41 84 44 85 46 85 56 91 56 91 34 90 33 93 31 95 27ZM73 50 74 49 75 51 74 52ZM154 18 148 18 148 50 147 51 138 51 137 50 137 29 134 26 129 26 126 28 125 30 126 36 132 38 132 56 154 56ZM130 32 131 31 132 32 131 33ZM64 13 60 13 59 14 59 17 56 20 53 19 54 18 52 14 48 13 44 15 43 18 44 19 44 22 49 26 46 30 46 33 48 36 42 44 41 43 41 30 40 28 35 25 30 28 29 30 30 36 35 38 35 56 42 56 45 49 52 39 53 40 53 56 59 56 59 39 57 36 58 35 58 28 55 26 61 23 64 17ZM51 32 52 31 53 32 52 33ZM34 31 35 30 36 31 35 32ZM260 10 254 10 254 13 253 14 251 13 242 13 238 15 234 21 234 23 249 23 250 24 256 24 257 25 256 26 256 44 249 49 248 48 248 35 246 30 241 26 231 26 225 30 222 35 222 37 224 37 226 39 224 42 224 53 227 56 233 56 236 51 235 46 230 43 233 39 229 34 233 31 239 32 242 36 242 56 248 56 255 51 257 55 259 56 264 56 266 54 267 51 266 46 262 43 262 27 260 25ZM229 50 230 49 231 51 230 52ZM299 9 293 9 289 12 282 14 281 16 281 22 283 24 286 24 287 25 290 24 293 20 292 16 297 13ZM285 19 287 18 288 20 287 21ZM91 9 92 14 97 22 102 22 104 21 106 18 106 16 107 15 108 16 108 53 111 56 117 56 120 52 120 49 118 45 113 43 113 11 112 9 110 8 104 9 100 17 98 15 97 9ZM113 51 114 49 116 50 114 52Z"/></svg>
<svg style="position:absolute;left:551.25px;top:394.0px;overflow:visible" width="1" height="1"><path transform="scale(.25)" fill="#fff" stroke="#fff" stroke-width="1.2" stroke-linejoin="round" fill-rule="evenodd" d="M117 29 114 36 114 41 116 48 116 56 123 56 127 53 131 47 131 43 132 42 131 41 131 38 129 36 123 36 121 38 120 37 121 34 126 31 131 31 136 35 136 56 142 56 142 34 140 30 134 26 122 26ZM124 42 125 41 127 42 126 43ZM87 28 81 36 86 38 83 46 83 56 89 56 89 44 93 39 89 34 93 31 97 31 101 34 102 36 102 56 108 56 108 35 106 30 101 26 91 26ZM67 26 67 52 70 56 76 56 78 55 79 53 79 48 77 45 73 43 73 26ZM73 50 74 49 75 51 74 52ZM30 28 29 31 30 35 32 37 35 37 36 38 36 56 42 56 51 51 54 56 60 56 62 54 63 48 62 46 57 42 57 26 52 26 52 44 50 46 43 49 42 48 42 32 40 27 38 26 33 26ZM34 32 35 31 36 32 35 33ZM82 21 82 23 97 23 98 24 108 25 106 18 100 13 90 13 88 14ZM94 18 95 17 97 18 96 19ZM12 13 9 14 7 18 8 19 8 22 12 25 5 28 1 33 4 35 8 32 16 31 20 36 20 44 19 45 16 45 14 47 13 51 15 55 17 56 22 56 24 55 26 50 26 35 24 30 19 26 25 23 28 17 28 13 24 13 23 14 23 17 20 20 17 19 18 18 16 14ZM18 50 19 49 20 50 19 51Z"/></svg>
<svg style="position:absolute;left:551.25px;top:480.0px;overflow:visible" width="1" height="1"><path transform="scale(.25)" fill="#fff" stroke="#fff" stroke-width="1.2" stroke-linejoin="round" fill-rule="evenodd" d="M273 27 271 31 271 37 274 41 272 44 272 56 294 56 294 26 289 26 289 50 288 51 279 51 278 50 278 45 285 43 285 39 280 39 279 38 284 35 284 29 281 26 275 26ZM158 33 157 37 166 38 173 41 173 44 172 45 169 45 167 48 167 53 170 56 176 56 179 50 179 40 177 37 174 35 169 34 168 32 169 31 172 31 176 33 181 33 183 29 184 30 184 35 190 39 190 56 213 56 213 43 216 40 216 37 217 36 213 34 213 26 207 26 207 35 206 36 202 36 200 37 199 39 201 44 207 46 207 50 206 51 197 51 196 50 196 31 193 26 187 26 185 27 184 29 183 27 179 28 174 26 166 26 162 28ZM172 50 173 49 174 51 173 52ZM188 32 189 31 190 32 189 33ZM10 26 3 31 1 37 10 38 16 40 17 41 17 44 12 46 11 48 11 53 14 56 20 56 23 50 23 40 21 37 18 35 13 34 12 32 13 31 16 31 20 33 25 33 27 27 23 28 18 26ZM16 50 17 49 18 51 17 52ZM95 24 89 24 89 26 87 28 83 26 73 26 66 31 66 33 68 36 71 33 76 31 80 31 85 35 84 37 83 36 74 36 70 38 67 44 67 49 68 50 68 53 71 56 77 56 79 54 80 51 79 47 74 43 76 41 80 41 84 44 85 46 85 56 91 56 91 34 90 33 93 31 95 27ZM73 50 74 49 75 51 74 52ZM154 18 148 18 148 50 147 51 138 51 137 50 137 29 134 26 129 26 126 28 125 30 126 36 132 38 132 56 154 56ZM130 32 131 31 132 32 131 33ZM64 13 60 13 59 14 59 17 56 20 53 19 54 18 52 14 48 13 44 15 43 18 44 19 44 22 49 26 46 30 46 33 48 36 42 44 41 43 41 30 40 28 35 25 30 28 29 30 30 36 35 38 35 56 42 56 45 49 52 39 53 40 53 56 59 56 59 39 57 36 58 35 58 28 55 26 61 23 64 17ZM51 32 52 31 53 32 52 33ZM34 31 35 30 36 31 35 32ZM260 10 254 10 254 13 253 14 251 13 242 13 238 15 234 21 234 23 249 23 250 24 256 24 257 25 256 26 256 44 249 49 248 48 248 35 246 30 241 26 231 26 225 30 222 35 222 37 224 37 226 39 224 42 224 53 227 56 233 56 236 51 235 46 230 43 233 39 229 34 233 31 239 32 242 36 242 56 248 56 255 51 257 55 259 56 264 56 266 54 267 51 266 46 262 43 262 27 260 25ZM229 50 230 49 231 51 230 52ZM299 9 293 9 289 12 282 14 281 16 281 22 283 24 286 24 287 25 290 24 293 20 292 16 297 13ZM285 19 287 18 288 20 287 21ZM91 9 92 14 97 22 102 22 104 21 106 18 106 16 107 15 108 16 108 53 111 56 117 56 120 52 120 49 118 45 113 43 113 11 112 9 110 8 104 9 100 17 98 15 97 9ZM113 51 114 49 116 50 114 52Z"/></svg>
<svg style="position:absolute;left:551.0px;top:521.75px;overflow:visible" width="1" height="1"><path transform="scale(.25)" fill="#fff" stroke="#fff" stroke-width="1.2" stroke-linejoin="round" fill-rule="evenodd" d="M135 48 135 55 142 55 142 48ZM75 28 69 36 74 38 71 46 71 56 77 56 77 44 81 39 77 34 81 31 85 31 89 34 90 36 90 56 96 56 96 35 94 30 89 26 79 26ZM19 26 19 52 20 54 23 56 28 56 31 54 31 47 25 43 25 26ZM25 50 26 49 27 51 26 52ZM3 26 3 49 4 50 4 53 7 56 13 56 15 54 16 49 14 45 9 43 9 26ZM9 50 10 49 11 51 10 52ZM65 18 59 18 59 38 58 39 54 28 51 28 47 39 46 38 46 30 43 26 37 26 35 27 34 29 34 35 40 38 40 56 47 56 50 47 50 44 52 40 54 41 58 55 59 56 65 56ZM131 9 125 9 121 12 114 14 113 16 113 22 115 24 118 24 119 25 118 26 109 26 102 31 102 33 104 36 107 33 112 31 116 31 121 35 120 37 119 36 110 36 106 38 103 44 103 49 104 50 104 53 107 56 113 56 115 54 116 51 115 47 110 43 112 41 116 41 120 44 121 46 121 56 127 56 127 34 126 33 129 31 131 27 131 24 125 24 125 26 123 28 120 27 119 25 124 22 125 20 124 16 129 13ZM109 50 110 49 111 51 110 52ZM117 19 119 18 120 20 119 21Z"/></svg>
<svg style="position:absolute;left:551.25px;top:562.0px;overflow:visible" width="1" height="1"><path transform="scale(.25)" fill="#fff" stroke="#fff" stroke-width="1.2" stroke-linejoin="round" fill-rule="evenodd" d="M151 48 151 55 158 55 158 48ZM121 27 119 31 119 37 122 41 120 44 120 56 142 56 142 26 137 26 137 50 136 51 127 51 126 50 126 45 133 43 133 39 128 39 127 38 132 35 132 29 129 26 123 26ZM90 28 87 31 87 33 89 36 96 31 101 31 106 35 105 37 103 36 95 36 90 39 88 44 88 50 90 55 92 56 98 56 100 54 100 47 98 45 96 45 95 43 97 41 101 41 103 42 106 46 106 56 112 56 112 34 110 30 107 27 104 26 94 26ZM94 50 95 49 96 51 95 52ZM50 28 50 35 52 37 55 37 56 38 56 43 51 47 51 52 54 56 59 56 61 55 63 51 72 56 78 56 78 26 72 26 72 49 71 50 62 44 62 31 61 28 58 26 53 26ZM54 32 55 31 56 32 55 33ZM35 26 35 52 38 56 44 56 46 55 47 53 47 48 45 45 41 43 41 26ZM41 50 42 49 43 51 42 52ZM6 28 2 32 5 35 7 33 12 31 17 31 20 33 21 35 21 50 20 51 11 51 10 50 11 47 14 47 16 45 17 41 15 37 13 36 8 36 5 39 5 42 4 43 4 56 27 56 27 33 25 29 19 26 10 26ZM10 41 11 40 12 41 11 42ZM28 10 22 10 22 13 21 14 19 13 10 13 4 17 2 23 17 23 18 24 28 25ZM147 9 141 9 137 12 130 14 129 16 129 22 131 24 134 24 135 25 138 24 141 20 140 16 145 13ZM133 19 135 18 136 20 135 21Z"/></svg>
<svg style="position:absolute;left:906.25px;top:202.0px;overflow:visible" width="1" height="1"><path transform="scale(.25)" fill="#fff" stroke="#fff" stroke-width="1.2" stroke-linejoin="round" fill-rule="evenodd" d="M277 26 272 30 270 35 274 36 279 31 285 32 287 35 287 56 293 56 293 35 292 34 292 31 290 28 286 26ZM240 30 237 36 240 37 241 39 239 42 239 44 238 45 235 45 232 50 234 55 236 56 241 56 243 55 245 50 245 43 248 39 244 34 249 31 253 31 257 35 257 55 258 56 263 56 263 34 262 31 256 26 246 26ZM237 50 238 49 239 50 238 51ZM205 27 203 31 203 37 206 41 204 44 204 56 226 56 226 26 221 26 221 50 220 51 211 51 210 50 210 45 217 43 217 39 212 39 211 38 216 35 216 29 213 26 207 26ZM155 26 155 52 158 56 164 56 166 55 167 53 167 48 165 45 161 43 161 26ZM161 50 162 49 163 51 162 52ZM125 26 122 30 122 56 128 56 131 51 135 48 140 55 143 57 143 65 142 66 141 65 141 60 139 57 134 57 132 59 132 65 136 67 136 70 148 70 147 26 141 26 141 44 140 45 136 39 133 39 131 43 129 45 128 44 128 38 129 37 132 37 134 35 134 29 133 27 131 26ZM127 32 128 31 130 32 129 33ZM53 27 49 33 49 38 52 42 58 42 59 41 60 42 60 56 79 56 79 26 73 26 73 50 72 51 67 51 66 50 66 41 70 36 68 29 63 26 55 26ZM54 36 55 35 56 37 55 38ZM59 32 61 31 64 35 62 37ZM22 28 19 31 19 33 21 36 28 31 33 31 38 35 37 37 35 36 27 36 22 39 20 44 20 50 22 55 24 56 30 56 32 54 32 47 30 45 28 45 27 43 29 41 33 41 35 42 38 46 38 56 44 56 44 34 42 30 39 27 36 26 26 26ZM26 50 27 49 28 51 27 52ZM3 26 3 52 6 56 12 56 14 55 15 53 15 48 13 45 9 43 9 26ZM9 50 10 49 11 51 10 52ZM132 24 139 24 142 22 144 22 149 17 151 12 145 12 144 15 141 18 139 13 137 12 132 12 130 14 130 18 132 20ZM324 10 318 10 318 13 317 14 315 13 306 13 302 15 298 21 298 23 313 23 314 24 320 24 321 25 319 26 319 35 318 36 314 36 312 37 311 39 313 44 319 46 319 50 318 51 309 51 308 50 308 31 307 28 305 26 299 26 297 27 296 29 296 35 302 39 302 56 325 56 325 43 328 40 328 37 329 36 325 34ZM300 32 301 31 302 32 301 33ZM196 10 190 10 190 13 189 14 187 13 178 13 174 15 170 21 170 23 185 23 186 24 192 24 193 25 191 28 187 26 177 26 170 31 170 33 172 36 175 33 180 31 184 31 189 35 188 37 187 36 178 36 174 38 171 44 171 49 172 50 172 53 175 56 181 56 183 54 184 51 183 47 178 43 180 41 184 41 188 44 189 46 189 56 195 56 195 34 194 33 197 31 199 27 199 24 196 23ZM177 50 178 49 179 51 178 52ZM115 1 111 1 110 2 110 13 109 14 107 13 98 13 94 15 90 21 90 23 105 23 106 24 112 24 113 25 112 26 106 26 104 28 98 41 96 37 97 35 96 29 93 26 88 26 86 27 84 30 85 35 87 37 90 37 91 38 91 56 97 56 108 33 109 34 109 56 115 56 115 29 112 26 113 25 116 25 116 2ZM89 32 90 31 91 32 90 33Z"/></svg>
<svg style="position:absolute;left:941.25px;top:237.0px;overflow:visible" width="1" height="1"><path transform="scale(.25)" fill="#fff" stroke="#fff" stroke-width="1.2" stroke-linejoin="round" fill-rule="evenodd" d="M173 26 168 30 166 35 170 36 175 31 181 32 183 35 183 56 189 56 189 35 188 34 188 31 186 28 182 26ZM133 27 129 33 129 38 132 42 138 42 139 41 140 42 140 56 159 56 159 26 153 26 153 50 152 51 147 51 146 50 146 41 150 36 148 29 143 26 135 26ZM134 36 135 35 136 37 135 38ZM139 32 141 31 144 35 142 37ZM109 26 104 30 102 35 106 36 111 31 117 32 119 35 119 56 125 56 125 35 124 34 124 31 122 28 118 26ZM42 28 38 32 41 35 43 33 48 31 53 31 56 33 57 35 57 50 56 51 47 51 46 50 47 47 50 47 52 45 53 41 51 37 49 36 44 36 41 39 41 42 40 43 40 56 63 56 63 33 61 29 55 26 46 26ZM46 41 47 40 48 41 47 42ZM99 24 93 24 93 26 91 28 87 26 77 26 70 31 70 33 72 36 75 33 80 31 84 31 89 35 88 37 87 36 78 36 74 38 71 44 71 49 72 50 72 53 75 56 81 56 83 54 84 51 83 47 78 43 80 41 84 41 88 44 89 46 89 56 95 56 95 34 94 33 97 31 99 27ZM77 50 78 49 79 51 78 52ZM27 1 23 1 22 2 22 10 20 11 18 14 11 15 6 22 7 23 21 23 22 24 26 24 27 25 27 28 22 31 16 26 8 26 3 30 2 33 2 38 5 42 11 42 12 41 13 42 13 56 31 56 31 38 28 34 33 30 32 11 29 11 28 10 28 2ZM22 37 25 39 25 50 24 51 20 51 19 50 19 40ZM7 36 8 35 9 37 8 38ZM12 32 14 31 16 33 16 35 15 36Z"/></svg>
<svg style="position:absolute;left:914.5px;top:275.0px;overflow:visible" width="1" height="1"><path transform="scale(.25)" fill="#fff" stroke="#fff" stroke-width="1.2" stroke-linejoin="round" fill-rule="evenodd" d="M312 28 309 31 309 33 311 36 318 31 323 31 328 35 327 37 325 36 317 36 312 39 310 44 310 50 312 55 314 56 320 56 322 54 322 47 320 45 318 45 317 43 319 41 323 41 325 42 328 46 328 56 334 56 334 34 332 30 329 27 326 26 316 26ZM316 50 317 49 318 51 317 52ZM278 27 274 31 273 34 273 44 275 50 275 56 282 56 284 47 285 46 286 47 291 47 294 43 295 44 295 56 301 56 301 37 299 31 293 26 281 26ZM287 41 288 40 289 42 288 43ZM279 36 282 32 289 31 294 35 295 39 294 40 291 36 285 36 283 37 280 41 279 40ZM242 27 238 31 237 34 237 44 239 50 239 56 246 56 248 47 249 46 250 47 255 47 258 43 259 44 259 56 265 56 265 37 263 31 257 26 245 26ZM251 41 252 40 253 42 252 43ZM243 36 246 32 253 31 258 35 259 39 258 40 255 36 249 36 247 37 244 41 243 40ZM204 27 203 29 203 35 205 37 208 37 209 38 209 56 222 56 223 57 221 59 221 64 225 67 225 70 230 70 230 60 228 57 229 56 232 56 232 26 226 26 226 50 225 51 216 51 215 50 215 32 213 27 211 26 206 26ZM207 32 208 31 209 32 208 33ZM53 27 49 33 49 38 52 42 58 42 59 41 60 42 60 56 79 56 79 26 73 26 73 50 72 51 67 51 66 50 66 41 70 36 68 29 63 26 55 26ZM54 36 55 35 56 37 55 38ZM59 32 61 31 64 35 62 37ZM22 28 19 31 19 33 21 36 28 31 33 31 38 35 37 37 35 36 27 36 22 39 20 44 20 50 22 55 24 56 30 56 32 54 32 47 30 45 28 45 27 43 29 41 33 41 35 42 38 46 38 56 44 56 44 34 42 30 39 27 36 26 26 26ZM26 50 27 49 28 51 27 52ZM3 26 3 52 6 56 12 56 14 55 15 53 15 48 13 45 9 43 9 26ZM9 50 10 49 11 51 10 52ZM180 13 173 19 172 23 187 23 194 25 187 28 184 26 178 27 174 31 172 37 173 39 173 45 174 46 174 56 181 56 185 53 189 47 190 44 189 38 187 36 182 36 181 37 179 36 182 32 185 34 188 34 190 32 192 32 194 34 195 37 195 56 200 56 200 33 199 31 193 26 194 25 198 25 196 18 190 13ZM183 42 184 41 185 42 184 43ZM178 37 179 36 180 38 179 39ZM184 18 185 17 187 18 186 19ZM142 14 137 19 136 23 151 23 158 25 158 44 156 46 149 49 148 48 148 32 146 27 144 26 139 26 136 28 135 31 136 35 138 37 141 37 142 38 142 56 148 56 157 51 160 56 166 56 168 54 169 48 168 46 163 42 163 26 160 18 154 13 144 13ZM140 32 141 31 142 32 141 33ZM148 18 149 17 151 18 150 19ZM115 1 111 1 110 2 110 13 109 14 107 13 98 13 94 15 90 21 90 23 105 23 106 24 112 24 113 25 112 26 106 26 104 28 98 41 96 37 97 35 96 29 93 26 88 26 86 27 84 30 85 35 87 37 90 37 91 38 91 56 97 56 108 33 109 34 109 56 115 56 115 29 112 26 113 25 116 25 116 2ZM89 32 90 31 91 32 90 33Z"/></svg>
<svg style="position:absolute;left:928.25px;top:358.75px;overflow:visible" width="1" height="1"><path transform="scale(.25)" fill="#fff" stroke="#fff" stroke-width="1.2" stroke-linejoin="round" fill-rule="evenodd" d="M65 31 63 33 63 37 67 42 63 45 64 51 67 54 70 54 71 55 79 53 83 49 84 43 79 41 83 37 84 31 83 30 79 30 79 33 76 37 73 36 73 33 69 30ZM67 47 68 46 69 47 68 48ZM78 41 79 42 79 45 76 49 74 49 72 44 74 42 77 42ZM67 35 68 34 69 35 68 36ZM105 28 104 30 105 35 107 37 110 37 111 38 111 56 117 56 128 33 129 34 129 56 135 56 135 29 132 26 126 26 124 28 118 41 116 37 117 35 116 29 113 26 108 26ZM109 32 110 31 111 32 110 33ZM91 26 91 52 94 56 100 56 102 55 103 53 103 48 101 45 97 43 97 26ZM97 50 98 49 99 51 98 52ZM42 26 35 31 33 37 42 38 48 40 49 41 49 44 44 46 43 48 43 53 46 56 52 56 55 50 55 40 53 37 50 35 45 34 44 32 45 31 48 31 52 33 57 33 59 27 55 28 50 26ZM48 50 49 49 50 51 49 52ZM173 24 166 24 164 27 161 27 160 26 150 26 143 31 141 35 141 42 143 48 143 56 150 56 152 48 153 47 159 47 161 46 162 44 163 45 163 56 169 56 169 35 168 32 171 29ZM156 41 157 40 158 42 157 43ZM147 41 147 36 153 31 160 32 163 36 162 39 161 37 159 36 153 36 148 42ZM30 18 24 18 24 50 23 51 14 51 13 50 13 29 10 26 5 26 2 28 1 30 2 36 8 38 8 56 30 56ZM6 32 7 31 8 32 7 33Z"/></svg>
<svg style="position:absolute;left:928.25px;top:483.75px;overflow:visible" width="1" height="1"><path transform="scale(.25)" fill="#fff" stroke="#fff" stroke-width="1.2" stroke-linejoin="round" fill-rule="evenodd" d="M65 31 63 33 63 37 67 42 63 45 64 51 67 54 70 54 71 55 79 53 83 49 84 43 79 41 83 37 84 31 83 30 79 30 79 33 76 37 73 36 73 33 69 30ZM67 47 68 46 69 47 68 48ZM78 41 79 42 79 45 76 49 74 49 72 44 74 42 77 42ZM67 35 68 34 69 35 68 36ZM105 28 104 30 105 35 107 37 110 37 111 38 111 56 117 56 128 33 129 34 129 56 135 56 135 29 132 26 126 26 124 28 118 41 116 37 117 35 116 29 113 26 108 26ZM109 32 110 31 111 32 110 33ZM91 26 91 52 94 56 100 56 102 55 103 53 103 48 101 45 97 43 97 26ZM97 50 98 49 99 51 98 52ZM42 26 35 31 33 37 42 38 48 40 49 41 49 44 44 46 43 48 43 53 46 56 52 56 55 50 55 40 53 37 50 35 45 34 44 32 45 31 48 31 52 33 57 33 59 27 55 28 50 26ZM48 50 49 49 50 51 49 52ZM173 24 166 24 164 27 161 27 160 26 150 26 143 31 141 35 141 42 143 48 143 56 150 56 152 48 153 47 159 47 161 46 162 44 163 45 163 56 169 56 169 35 168 32 171 29ZM156 41 157 40 158 42 157 43ZM147 41 147 36 153 31 160 32 163 36 162 39 161 37 159 36 153 36 148 42ZM30 18 24 18 24 50 23 51 14 51 13 50 13 29 10 26 5 26 2 28 1 30 2 36 8 38 8 56 30 56ZM6 32 7 31 8 32 7 33Z"/></svg>
<svg style="position:absolute;left:928.5px;top:526.0px;overflow:visible" width="1" height="1"><path transform="scale(.25)" fill="#fff" stroke="#fff" stroke-width="1.2" stroke-linejoin="round" fill-rule="evenodd" d="M154 28 153 31 154 35 156 37 159 37 160 38 160 56 166 56 175 51 178 56 184 56 186 54 187 48 186 46 181 42 181 26 176 26 176 44 174 46 167 49 166 48 166 32 164 27 162 26 157 26ZM158 32 159 31 160 32 159 33ZM133 26 128 30 126 35 130 36 135 31 141 32 143 35 143 56 149 56 149 35 148 34 148 31 146 28 142 26ZM113 26 110 29 110 35 112 37 115 37 116 38 116 49 114 51 112 51 110 48 109 39 104 36 102 36 102 38 103 39 104 48 106 53 110 56 117 56 119 55 122 51 122 30 119 26ZM114 32 115 31 116 32 115 33ZM81 26 76 30 74 35 78 36 83 31 89 32 91 35 91 56 97 56 97 35 96 34 96 31 94 28 90 26ZM69 14 67 13 61 13 59 14 57 17 58 23 61 25 56 28 50 41 48 37 49 35 48 29 45 26 40 26 37 28 36 30 37 35 39 37 42 37 43 38 43 56 49 56 60 33 61 34 61 56 67 56 67 29 64 26 69 24 71 20 71 17ZM41 32 42 31 43 32 42 33ZM63 19 64 18 65 19 64 20ZM31 1 27 1 26 2 26 13 25 14 23 13 14 13 10 15 6 21 6 23 21 23 22 24 28 24 29 25 28 26 22 26 20 28 14 41 12 37 13 35 12 29 9 26 4 26 2 27 0 30 1 35 3 37 6 37 7 38 7 56 13 56 24 33 25 34 25 56 31 56 31 29 28 26 29 25 32 25 32 2ZM5 32 6 31 7 32 6 33Z"/></svg>
<svg style="position:absolute;left:928.25px;top:572.0px;overflow:visible" width="1" height="1"><path transform="scale(.25)" fill="#fff" stroke="#fff" stroke-width="1.2" stroke-linejoin="round" fill-rule="evenodd" d="M21 28 17 32 17 33 20 35 22 33 27 31 32 31 36 36 36 44 35 45 32 45 30 47 29 51 31 55 33 56 38 56 40 55 42 50 42 35 40 30 35 26 25 26ZM34 50 35 49 36 50 35 51ZM3 26 3 52 6 56 12 56 14 55 15 53 15 48 13 45 9 43 9 26ZM9 50 10 49 11 51 10 52ZM110 26 106 30 104 37 105 38 105 41 108 43 113 43 116 40 117 41 117 56 135 56 135 38 132 34 137 30 138 25 132 25 131 28 127 31 121 26 118 26 116 28 115 28 113 25ZM126 37 129 39 129 50 128 51 124 51 123 50 123 41ZM110 37 111 36 112 38 111 39ZM119 32 121 35 118 38 117 41 116 40 116 35ZM171 9 165 9 161 12 154 14 153 16 153 22 155 24 158 24 159 25 158 26 149 26 142 31 142 33 144 36 147 33 152 31 156 31 161 35 160 37 159 36 150 36 146 38 143 44 143 49 144 50 144 53 147 56 153 56 155 54 156 51 155 47 150 43 152 41 156 41 160 44 161 46 161 56 167 56 167 34 166 33 169 31 171 27 171 24 165 24 165 26 163 28 160 27 159 25 164 22 165 20 164 16 169 13ZM149 50 150 49 151 51 150 52ZM157 19 159 18 160 20 159 21ZM92 9 90 8 84 9 80 17 78 15 77 9 71 9 72 14 74 17 73 18 68 18 68 50 67 51 58 51 57 50 57 29 54 26 49 26 46 28 45 30 46 36 52 38 52 56 74 56 74 21 75 20 77 22 82 22 84 21 87 15 88 16 88 53 91 56 97 56 100 52 99 46 93 43 93 11ZM93 51 94 49 96 50 94 52ZM50 32 51 31 52 32 51 33Z"/></svg>
<div class="a en" style="left:173px;top:209px;">Company</div>
<div class="a en" style="left:173px;top:248px;">First Name</div>
<div class="a en" style="left:173px;top:287px;">Nickname.</div>
<div class="a en" style="left:173px;top:329px;">Address</div>
<div class="a en" style="left:173px;top:372px;">City</div>
<div class="a en" style="left:173px;top:412px;">Profession</div>
<div class="a en" style="left:173px;top:453px;">Workplace</div>
<div class="a en" style="left:173px;top:497px;">City</div>
<div class="a en" style="left:173px;top:539px;">Telephone</div>
<div class="a en" style="left:173px;top:580px;">Mobile.</div>
<div class="a en" style="left:551px;top:249px;">Surname</div>
<div class="a en" style="left:551px;top:372px;">Post Code</div>
<div class="a en" style="left:551px;top:411px;">Barth day</div>
<div class="a en" style="left:551px;top:497px;">Post Code</div>
<div class="a en" style="left:551px;top:539px;">Fax</div>
<div class="a en" style="left:551px;top:580px;">E-mail.</div>
<div class="a en" style="left:928px;top:374px;">Country</div>
<div class="a en" style="left:928px;top:503px;">Country</div>
<div class="a en" style="left:928px;top:544px;">Tel. office</div>
<div class="a en" style="left:928px;top:589px;">Website.</div>
<div class="in" style="left:288px;top:189px;width:616px;height:30px"></div>
<div class="it" style="left:293px;top:195px;">PAIROJ&nbsp; SAWASDEE</div>
<div class="in" style="left:1048px;top:189px;width:218px;height:29px"></div>
<div class="in" style="left:288px;top:228px;width:235px;height:30px"></div>
<svg style="position:absolute;left:293.75px;top:234.25px;overflow:visible" width="1" height="1"><path transform="scale(.25)" fill="#000" stroke="#000" stroke-width="0.9" stroke-linejoin="round" fill-rule="evenodd" d="M145 28 143 30 143 35 145 37 148 37 149 38 149 55 153 55 163 49 164 50 164 53 166 55 170 55 172 53 172 47 167 43 167 28 164 28 164 45 162 47 153 51 152 50 152 31 149 28ZM168 47 170 49 170 52 169 53 167 52 167 48ZM144 32 147 30 149 33 146 35ZM119 29 114 33 116 35 122 31 128 31 132 34 133 36 133 50 131 52 128 52 127 51 127 43 125 38 119 38 117 40 117 44 118 46 123 48 125 54 127 55 133 55 136 52 136 34 132 29 129 28ZM122 40 123 43 121 45 119 42ZM93 28 89 31 87 34 87 37 96 38 101 41 101 45 96 48 96 53 98 55 102 55 105 51 105 41 102 37 92 34 95 31 101 31 105 33 108 33 108 30 105 30 101 28ZM100 48 102 49 102 52 101 53 98 52 98 50ZM27 28 25 31 25 35 27 37 30 37 31 38 31 55 35 55 36 54 40 39 42 37 48 55 53 55 53 29 49 29 49 45 48 46 47 45 44 34 42 30 41 30 37 44 35 47 34 46 34 30 32 28ZM29 30 31 31 31 34 30 35 27 34 27 32ZM173 13 170 13 167 15 161 16 158 20 159 23 161 25 166 25 168 22 166 18ZM161 20 164 19 166 22 163 24 161 22ZM63 11 58 15 56 19 57 20 65 21 69 24 69 49 70 50 70 53 72 55 77 55 79 53 79 49 77 46 74 46 73 45 73 25 69 20 61 17 64 14 70 14 74 16 78 16 81 14 81 12 73 13 69 11ZM73 49 76 48 77 49 77 52 74 53 73 52ZM-3 12 -2 17 1 22 6 22 9 18 9 15 10 14 12 15 12 51 14 55 19 55 21 54 22 52 21 47 16 45 16 16 15 13 13 11 8 12 6 18 3 20 1 18 0 12ZM15 50 17 48 19 48 20 49 20 52 17 53Z"/></svg>
<div class="in" style="left:672px;top:228px;width:235px;height:30px"></div>
<svg style="position:absolute;left:677.0px;top:234.0px;overflow:visible" width="1" height="1"><path transform="scale(.25)" fill="#000" stroke="#000" stroke-width="0.9" stroke-linejoin="round" fill-rule="evenodd" d="M100 29 97 32 95 37 96 47 97 48 97 55 102 55 108 49 110 44 108 38 103 38 101 40 101 44 100 45 99 44 99 36 100 34 104 31 111 31 115 34 116 36 116 55 120 55 120 37 118 32 115 29 112 28 103 28ZM100 45 101 44 104 46 105 48 103 50 101 50 100 49ZM103 41 106 40 107 43 104 44ZM37 30 34 33 35 34 41 31 48 31 51 33 52 35 52 45 51 46 48 46 46 48 46 53 48 55 53 55 55 53 55 33 53 30 49 28 41 28ZM51 48 52 51 49 53 48 50ZM88 26 86 26 82 30 78 28 70 28 63 32 63 33 65 34 70 31 76 31 81 35 81 38 80 39 76 37 72 37 66 40 64 44 64 51 67 55 71 55 73 54 74 52 73 47 68 45 68 43 72 40 75 40 80 43 81 45 81 54 82 55 85 55 85 36 84 33 88 29 89 27ZM68 49 70 48 72 50 72 52 69 53 68 52ZM28 26 26 26 22 30 18 28 10 28 3 32 3 33 5 34 10 31 16 31 21 35 21 38 20 39 16 37 12 37 6 40 4 44 4 51 7 55 11 55 13 54 14 52 13 47 8 45 8 43 12 40 15 40 20 43 21 45 21 54 22 55 25 55 25 36 24 33 28 29 29 27ZM8 49 10 48 12 50 12 52 9 53 8 52ZM41 20 43 24 45 25 53 25 58 21 59 16 57 16 55 21 52 23 49 23 48 22 49 18 47 16 43 16ZM43 19 45 17 47 20 44 21ZM119 14 116 14 116 17 115 18 111 16 104 16 100 18 97 21 97 23 105 23 106 24 119 25ZM103 20 104 19 111 19 114 21 113 22 109 22Z"/></svg>
<div class="in" style="left:1048px;top:228px;width:218px;height:29px"></div>
<div class="in" style="left:288px;top:266px;width:235px;height:30px"></div>
<svg style="position:absolute;left:293.75px;top:272.25px;overflow:visible" width="1" height="1"><path transform="scale(.25)" fill="#000" stroke="#000" stroke-width="0.9" stroke-linejoin="round" fill-rule="evenodd" d="M89 28 87 30 87 35 89 37 92 37 93 38 93 55 97 55 107 49 108 50 108 53 110 55 114 55 116 53 116 47 111 43 111 28 108 28 108 45 106 47 97 51 96 50 96 31 93 28ZM112 47 114 49 114 52 113 53 111 52 111 48ZM88 32 91 30 93 33 90 35ZM63 29 58 33 60 35 66 31 72 31 76 34 77 36 77 50 75 52 72 52 71 51 71 43 69 38 63 38 61 40 61 44 62 46 67 48 69 54 71 55 77 55 80 52 80 34 76 29 73 28ZM66 40 67 43 65 45 63 42ZM37 28 33 31 31 34 31 37 40 38 45 41 45 45 40 48 40 53 42 55 46 55 49 51 49 41 46 37 36 34 39 31 45 31 49 33 52 33 52 30 49 30 45 28ZM44 48 46 49 46 52 45 53 42 52 42 50ZM117 13 114 13 111 15 105 16 102 20 103 23 105 25 110 25 112 22 110 18ZM105 20 108 19 110 22 107 24 105 22ZM7 11 2 15 0 19 1 20 9 21 13 24 13 49 14 50 14 53 16 55 21 55 23 53 23 49 21 46 18 46 17 45 17 25 13 20 5 17 8 14 14 14 18 16 22 16 25 14 25 12 17 13 13 11ZM17 49 20 48 21 49 21 52 18 53 17 52Z"/></svg>
<div class="in" style="left:672px;top:266px;width:235px;height:30px"></div>
<div class="in" style="left:1049px;top:267px;width:234px;height:30px"></div>
<div class="in" style="left:288px;top:309px;width:915px;height:32px"></div>
<svg style="position:absolute;left:294.25px;top:314.0px;overflow:visible" width="1" height="1"><path transform="scale(.25)" fill="#000" stroke="#000" stroke-width="0.9" stroke-linejoin="round" fill-rule="evenodd" d="M840 54 838 56 838 58 842 61 842 63 845 63 845 57 843 54ZM841 55 842 56 841 59 839 57ZM692 47 692 51 695 51 695 47ZM227 47 227 51 231 51 231 47ZM766 47 770 50 776 50 781 46 782 41 780 41 779 45 775 48 772 47 773 44 771 41 767 41 766 42ZM767 44 769 42 771 45 769 46ZM766 36 770 39 776 39 781 35 782 30 780 30 779 34 775 37 772 36 773 33 771 30 767 30 766 31ZM767 33 769 31 771 32 770 35ZM994 26 992 29 992 35 995 39 992 42 992 51 1010 51 1010 26 1007 26 1007 48 1006 49 997 49 995 47 995 43 998 40 1001 40 1002 38 999 38 995 35 1001 33 1001 28 999 26ZM995 30 997 28 999 29 998 32ZM964 28 961 33 961 40 962 41 963 51 969 50 974 43 974 36 972 35 968 35 965 40 964 39 964 34 968 29 971 29 972 28 974 28 979 31 981 37 981 51 984 51 984 35 983 34 983 31 977 26 968 26ZM966 40 967 42 970 44 968 47 967 47 965 44 965 41ZM968 38 971 37 972 40 969 41ZM934 27 930 31 931 32 936 29 939 29 940 28 944 29 947 32 947 47 946 48 943 48 941 45 941 37 939 35 935 35 933 37 933 41 938 44 939 49 941 51 947 51 949 50 950 48 950 31 949 29 945 26 937 26ZM935 40 936 37 939 39 937 41ZM915 26 915 49 917 51 921 51 923 49 923 45 922 43 919 43 918 42 918 26ZM918 45 920 44 922 46 922 48 919 49 918 48ZM894 26 888 31 887 34 899 36 901 38 901 42 900 43 897 43 896 49 898 51 902 51 904 49 904 37 901 34 895 33 893 30 897 28 902 30 907 30 908 28 905 28 901 26ZM898 46 901 45 902 48 899 49ZM854 26 852 29 852 31 854 34 857 34 858 35 858 51 862 51 863 50 864 46 868 39 868 37 873 29 874 30 874 51 878 51 878 30 876 26 871 26 869 28 862 44 861 43 861 29 860 27 858 26ZM854 30 856 28 858 29 857 32 855 32ZM820 27 819 30 820 33 825 35 825 41 821 44 821 49 823 51 827 51 828 50 828 47 830 46 838 51 842 51 842 26 839 26 839 47 838 48 828 42 828 28 826 26ZM824 44 825 45 825 48 824 49 823 48 823 45ZM821 30 823 28 825 29 824 32ZM745 26 739 31 738 34 750 36 752 38 752 42 751 43 748 43 747 49 749 51 753 51 755 49 755 37 752 34 746 33 744 30 748 28 753 30 758 30 759 28 756 28 752 26ZM749 46 752 45 753 48 750 49ZM705 26 703 28 703 32 705 34 708 34 709 35 709 51 712 51 713 50 716 41 716 38 718 34 720 36 720 39 724 51 728 51 728 27 725 27 725 41 724 42 723 41 719 28 718 28 713 42 712 41 712 30 709 26ZM705 29 708 28 709 31 706 32ZM663 28 662 31 671 28 674 29 678 33 678 47 676 49 667 49 666 48 666 44 667 43 670 43 672 39 670 35 665 35 663 38 663 51 681 51 681 32 680 30 675 26 667 26ZM666 40 667 37 670 39 668 41ZM619 28 616 33 616 40 617 41 618 51 624 50 629 43 629 36 627 35 623 35 620 40 619 39 619 34 623 29 626 29 627 28 629 28 634 31 636 37 636 51 639 51 639 35 638 34 638 31 632 26 623 26ZM621 40 622 42 625 44 623 47 622 47 620 44 620 41ZM623 38 626 37 627 40 624 41ZM589 28 586 32 586 33 590 36 587 40 587 51 590 51 590 41 593 37 590 32 593 29 596 28 597 29 600 29 603 32 603 36 604 37 604 51 607 51 607 35 605 29 600 26 593 26ZM565 27 561 32 563 33 569 28 573 29 575 31 576 34 576 51 579 51 579 33 578 30 573 26 567 26ZM534 28 532 30 532 32 537 29 542 28 545 29 548 32 549 36 548 37 544 35 538 35 533 39 533 49 535 51 541 50 542 47 540 43 537 43 536 40 538 38 542 37 547 40 549 45 549 51 552 51 552 34 550 29 545 26 538 26ZM536 46 539 45 540 48 537 49ZM488 26 484 26 482 28 482 33 487 35 487 47 484 49 480 46 479 37 475 36 477 47 478 49 481 51 487 51 490 49 490 46 491 45 491 32 490 31 490 28ZM483 30 485 28 488 30 486 32ZM453 27 449 32 451 33 457 28 461 29 463 31 464 34 464 51 467 51 467 33 466 30 461 26 455 26ZM421 26 418 30 420 34 423 34 424 35 424 51 442 51 442 26 439 26 439 48 438 49 429 49 427 47 427 28 425 26ZM420 30 422 28 425 30 423 32ZM407 26 403 26 401 28 401 33 406 35 406 47 403 49 399 46 398 37 394 36 396 47 397 49 400 51 406 51 409 49 409 46 410 45 410 32 409 31 409 28ZM402 30 404 28 407 30 405 32ZM366 28 365 31 374 28 377 29 381 33 381 47 379 49 370 49 369 48 369 44 370 43 373 43 375 39 373 35 368 35 366 38 366 51 384 51 384 32 383 30 378 26 370 26ZM369 40 370 37 373 39 371 41ZM337 28 335 30 335 32 340 29 345 28 348 29 351 32 352 36 351 37 347 35 341 35 336 39 336 49 338 51 344 50 345 47 343 43 340 43 339 40 341 38 345 37 350 40 352 45 352 51 355 51 355 34 353 29 348 26 341 26ZM339 46 342 45 343 48 340 49ZM305 27 301 31 301 34 300 35 301 43 302 44 302 51 307 51 307 48 310 42 311 43 315 43 317 40 317 37 315 35 311 35 308 37 306 43 305 44 304 43 304 33 308 29 311 28 316 29 320 34 320 51 323 51 323 33 321 29 316 26 307 26ZM311 38 314 37 315 40 312 41ZM268 26 266 29 266 31 268 34 271 34 272 35 272 51 276 51 284 46 286 47 286 49 288 51 292 51 294 48 294 45 293 43 289 40 289 26 286 26 286 42 277 47 275 46 275 29 273 26ZM290 44 292 47 290 49 289 48 289 45ZM268 29 271 28 272 31 269 32ZM199 28 196 33 198 51 204 50 209 43 209 40 210 39 209 36 204 35 201 40 199 38 200 32 204 29 206 31 209 31 212 29 216 34 216 51 219 51 219 33 218 30 213 26 211 26 209 28 207 28 204 26ZM201 40 202 42 205 44 202 47 200 43ZM203 39 205 37 207 38 206 41 204 41ZM813 25 810 25 808 28 803 26 796 26 790 30 791 32 795 29 800 28 803 29 807 34 806 37 803 35 796 35 792 38 791 40 791 48 793 51 797 51 799 50 800 48 800 45 798 43 795 43 794 41 799 37 803 38 806 41 807 51 810 51 810 33 809 31 813 27ZM794 46 797 45 798 48 795 49ZM155 20 154 37 158 37 160 35 165 34 170 38 171 43 166 49 161 49 156 44 153 45 155 49 158 51 161 51 162 52 169 51 172 49 174 46 174 37 173 35 169 32 160 32 159 33 158 32 158 24 159 23 173 23 173 20ZM132 20 127 24 126 27 129 28 133 23 136 22 139 23 142 26 142 31 138 34 133 34 133 37 139 37 141 38 143 41 143 45 139 49 134 49 132 48 129 43 126 44 127 48 131 51 134 51 135 52 142 51 145 49 147 45 146 39 141 35 145 32 146 30 146 25 143 21 140 20ZM106 20 102 23 99 30 99 42 101 47 105 51 111 52 116 50 118 48 120 43 119 36 115 32 109 31 104 33 103 32 103 28 107 23 113 23 115 26 118 26 118 24 116 21ZM107 34 113 35 116 39 116 44 115 46 111 49 106 48 103 44 103 38 104 36ZM63 20 61 21 57 26 57 34 58 36 62 40 69 40 73 37 74 38 74 41 72 46 68 49 64 49 61 45 58 45 58 47 61 51 67 52 72 50 77 43 77 28 74 22 70 20ZM64 23 70 23 73 27 73 30 74 31 73 34 68 38 65 38 61 34 60 31 61 26ZM39 20 32 25 32 28 38 24 39 25 39 47 38 48 31 48 31 51 50 51 50 48 43 48 42 47 42 20ZM15 20 2 39 1 44 15 44 16 45 16 51 19 51 19 45 20 44 23 44 24 42 21 42 19 40 19 20ZM15 26 16 27 16 40 14 42 6 42 5 41 6 38ZM524 19 521 19 521 47 519 49 510 49 509 48 509 29 507 26 502 26 500 28 500 32 502 34 505 34 506 35 506 51 524 51ZM502 29 505 28 506 31 503 32ZM94 19 91 19 82 52 85 52ZM981 13 978 13 978 16 977 17 974 15 968 15 964 17 961 21 981 23ZM966 19 969 17 973 17 977 20 975 21 974 20 967 20ZM1013 12 1010 12 1008 14 1002 15 1000 17 1000 21 1002 23 1007 23 1008 22 1008 18 1007 17 1012 14ZM1004 17 1006 18 1006 21 1005 22 1002 21 1002 19ZM247 10 242 12 240 14 239 19 241 22 245 23 250 20 250 15 249 14 250 13 255 17 255 20 250 27 250 49 252 51 257 51 259 48 258 44 253 42 253 27 257 22 257 15 256 13 253 11ZM253 45 255 44 257 46 257 48 254 49 253 48ZM245 14 248 16 248 19 246 21 244 21 242 19 242 16Z"/></svg>
<div class="in" style="left:288px;top:351px;width:235px;height:30px"></div>
<svg style="position:absolute;left:292.25px;top:357.25px;overflow:visible" width="1" height="1"><path transform="scale(.25)" fill="#000" stroke="#000" stroke-width="0.9" stroke-linejoin="round" fill-rule="evenodd" d="M54 58 52 60 53 64 56 64 57 65 57 68 59 68 59 60 57 58ZM54 60 56 59 57 62 55 63ZM281 28 277 31 275 34 275 37 284 38 289 41 289 45 284 48 284 53 286 55 290 55 293 51 293 41 290 37 280 34 283 31 289 31 293 33 296 33 296 30 293 30 289 28ZM288 48 290 49 290 52 289 53 286 52 286 50ZM251 29 247 35 250 35 255 31 259 31 262 33 263 35 263 55 267 55 267 37 266 36 266 33 264 30 260 28 253 28ZM219 30 215 35 215 36 219 39 216 46 216 55 220 55 220 43 223 39 219 35 224 31 229 31 233 34 234 36 234 55 238 55 238 38 236 32 231 28 223 28ZM191 29 187 35 190 35 195 31 199 31 202 33 203 35 203 55 207 55 207 37 206 36 206 33 204 30 200 28 193 28ZM165 28 161 31 159 34 159 37 168 38 173 41 173 45 168 48 168 53 170 55 174 55 177 51 177 41 174 37 164 34 167 31 173 31 177 33 180 33 180 30 177 30 173 28ZM172 48 174 49 174 52 173 53 170 52 170 50ZM105 28 101 31 99 34 99 37 108 38 113 41 113 45 108 48 108 53 110 55 114 55 117 51 117 41 114 37 104 34 107 31 113 31 117 33 120 33 120 30 117 30 113 28ZM112 48 114 49 114 52 113 53 110 52 110 50ZM65 31 66 35 68 37 71 37 72 38 72 55 76 55 77 54 77 52 82 43 82 41 88 31 90 34 90 55 93 55 93 31 92 29 86 28 84 30 76 47 75 46 75 32 72 28 68 28ZM67 32 70 30 72 33 69 35ZM37 28 35 30 35 35 37 37 40 37 41 38 41 44 38 45 36 48 37 54 38 55 42 55 44 53 44 50 45 49 55 55 59 55 59 28 56 28 56 50 55 51 46 47 44 45 44 31 43 29 41 28ZM40 47 41 48 41 52 39 53 38 52 38 49ZM39 30 41 32 40 35 37 34 37 32ZM28 26 26 26 22 30 18 28 10 28 3 32 3 33 5 34 10 31 16 31 21 35 21 38 20 39 16 37 12 37 6 40 4 44 4 51 7 55 11 55 13 54 14 52 13 47 8 45 8 43 12 40 15 40 20 43 21 45 21 54 22 55 25 55 25 36 24 33 28 29 29 27ZM8 49 10 48 12 50 12 52 9 53 8 52ZM152 20 149 20 149 51 148 52 137 52 136 51 136 32 133 28 129 28 126 31 127 36 132 38 132 55 152 55ZM128 32 131 30 133 33 130 35Z"/></svg>
<div class="in" style="left:672px;top:351px;width:235px;height:30px"></div>
<div class="it" style="left:677px;top:357px;color:#808080">10290</div>
<div class="in" style="left:1022px;top:350px;width:182px;height:30px"></div>
<svg style="position:absolute;left:1027.5px;top:356.25px;overflow:visible" width="1" height="1"><path transform="scale(.25)" fill="#000" stroke="#000" stroke-width="0.9" stroke-linejoin="round" fill-rule="evenodd" d="M63 28 60 32 60 37 62 41 64 42 61 45 61 55 80 55 80 28 77 28 77 51 76 52 65 52 64 51 64 45 67 43 71 43 71 41 67 41 64 38 70 36 70 30 68 28ZM66 30 68 31 68 34 67 35 64 34 64 32ZM25 31 26 35 28 37 31 37 32 38 32 55 36 55 37 54 37 52 42 43 42 41 48 31 50 34 50 55 53 55 53 31 52 29 46 28 44 30 36 47 35 46 35 32 32 28 28 28ZM27 32 30 30 32 33 29 35ZM-3 12 -2 17 1 22 6 22 9 18 9 15 10 14 12 15 12 51 14 55 19 55 21 54 22 52 21 47 16 45 16 16 15 13 13 11 8 12 6 18 3 20 1 18 0 12ZM15 50 17 48 19 48 20 49 20 52 17 53Z"/></svg>
<div class="in" style="left:288px;top:392px;width:235px;height:30px"></div>
<svg style="position:absolute;left:293.0px;top:398.0px;overflow:visible" width="1" height="1"><path transform="scale(.25)" fill="#000" stroke="#000" stroke-width="0.9" stroke-linejoin="round" fill-rule="evenodd" d="M281 31 282 35 284 37 287 37 288 38 288 55 292 55 293 54 293 52 298 43 298 41 304 31 306 34 306 55 309 55 309 31 308 29 302 28 300 30 292 47 291 46 291 32 288 28 284 28ZM283 32 286 30 288 33 285 35ZM251 28 249 30 249 35 251 37 254 37 255 38 255 55 275 55 275 43 278 39 278 37 275 36 275 29 274 28 271 28 271 39 270 40 269 38 267 37 264 39 265 44 271 46 271 51 270 52 259 52 258 51 258 30 256 28ZM269 41 270 40 271 42 270 43ZM265 39 267 38 269 40 267 42ZM253 30 255 31 255 34 254 35 251 34 251 32ZM229 28 225 31 223 34 223 37 232 38 237 41 237 45 232 48 232 53 234 55 238 55 241 51 241 41 238 37 228 34 231 31 237 31 241 33 244 33 244 30 241 30 237 28ZM236 48 238 49 238 52 237 53 234 52 234 50ZM192 28 190 30 190 35 192 37 195 37 196 38 196 55 215 55 215 28 212 28 212 51 211 52 200 52 199 51 199 31 198 29 196 28ZM194 30 196 32 195 35 192 34 192 32ZM157 28 155 30 155 35 157 37 160 37 161 38 161 55 165 55 175 49 176 50 176 53 178 55 182 55 184 53 184 47 179 43 179 28 176 28 176 45 174 47 165 51 164 50 164 31 161 28ZM180 47 182 49 182 52 181 53 179 52 179 48ZM156 32 159 30 161 33 158 35ZM131 29 127 35 130 35 135 31 139 31 142 33 143 35 143 55 147 55 147 37 146 36 146 33 144 30 140 28 133 28ZM117 28 113 28 111 30 111 36 117 38 117 49 115 52 111 52 109 50 108 42 107 40 104 39 104 44 105 45 106 52 110 55 116 55 118 54 120 51 120 31 119 29ZM112 33 114 31 117 32 115 35ZM75 30 71 35 71 36 75 39 72 46 72 55 76 55 76 43 79 39 75 35 80 31 85 31 89 34 90 36 90 55 94 55 94 38 92 32 87 28 79 28ZM37 28 35 30 35 35 37 37 40 37 41 38 41 55 45 55 55 49 56 50 56 53 58 55 62 55 64 53 64 47 59 43 59 28 56 28 56 45 54 47 45 51 44 50 44 31 41 28ZM60 47 62 49 62 52 61 53 59 52 59 48ZM36 32 39 30 41 33 38 35ZM3 28 1 31 1 35 3 37 6 37 7 38 7 55 11 55 12 54 16 39 18 37 24 55 29 55 29 29 25 29 25 45 24 46 23 45 20 34 18 30 17 30 13 44 11 47 10 46 10 30 8 28ZM5 30 7 31 7 34 6 35 3 34 3 32ZM261 20 263 24 265 25 273 25 278 21 279 16 277 16 275 21 272 23 269 23 268 22 269 18 267 16 263 16ZM263 19 265 17 267 20 264 21ZM221 22 221 23 226 23 227 24 243 25 240 19 235 16 228 16 224 18ZM226 21 229 18 234 18 239 22 237 23 236 22 227 22ZM45 20 47 24 49 25 57 25 62 21 63 16 61 16 59 21 56 23 53 23 52 22 53 18 51 16 47 16ZM47 19 49 17 51 20 48 21Z"/></svg>
<div class="in" style="left:672px;top:392px;width:235px;height:30px"></div>
<div class="it" style="left:677px;top:398px;">1/4/2522</div>
<div class="in" style="left:288px;top:434px;width:915px;height:32px"></div>
<svg style="position:absolute;left:295.0px;top:439.0px;overflow:visible" width="1" height="1"><path transform="scale(.25)" fill="#000" stroke="#000" stroke-width="0.9" stroke-linejoin="round" fill-rule="evenodd" d="M246 55 246 58 249 61 256 61 261 57 261 53 260 53 258 57 255 59 252 58 253 55 251 53 248 53ZM248 55 250 54 251 57 249 58ZM159 47 159 51 163 51 163 47ZM1065 27 1061 31 1061 34 1060 35 1061 43 1062 44 1062 51 1067 51 1067 48 1070 42 1071 43 1075 43 1077 40 1077 37 1075 35 1071 35 1068 37 1066 43 1065 44 1064 43 1064 33 1068 29 1071 28 1076 29 1080 34 1080 51 1083 51 1083 33 1081 29 1076 26 1067 26ZM1071 38 1074 37 1075 40 1072 41ZM1045 26 1045 48 1047 51 1051 51 1053 50 1054 46 1052 43 1049 43 1048 42 1048 26ZM1050 44 1052 46 1051 49 1048 48 1048 46ZM1031 26 1031 48 1032 50 1034 51 1038 51 1040 49 1040 45 1038 43 1035 43 1034 42 1034 26ZM1036 44 1038 45 1038 48 1037 49 1034 48 1034 46ZM1017 26 1013 26 1011 28 1011 33 1016 35 1016 47 1013 49 1009 46 1008 37 1004 36 1006 47 1007 49 1010 51 1016 51 1019 49 1019 46 1020 45 1020 32 1019 31 1019 28ZM1012 30 1014 28 1017 30 1015 32ZM982 27 978 32 980 33 986 28 990 29 992 31 993 34 993 51 996 51 996 33 995 30 990 26 984 26ZM949 26 946 30 948 34 951 34 952 35 952 51 970 51 970 26 967 26 967 48 966 49 957 49 955 47 955 28 953 26ZM948 30 950 28 953 30 951 32ZM921 28 918 33 920 51 926 50 931 43 931 40 932 39 931 36 926 35 923 40 921 38 922 32 926 29 928 31 931 31 934 29 938 34 938 51 941 51 941 33 940 30 935 26 933 26 931 28 929 28 926 26ZM923 40 924 42 927 44 924 47 922 43ZM925 39 927 37 929 38 928 41 926 41ZM886 27 883 31 883 36 884 38 888 39 891 37 891 32 888 30 891 28 894 29 896 32 896 34 893 37 893 51 908 51 908 26 905 26 905 47 903 49 898 49 896 47 896 37 899 34 898 29 894 26 888 26ZM885 34 888 33 890 35 887 37ZM867 26 867 49 869 51 873 51 875 49 875 45 874 43 871 43 870 42 870 26ZM870 45 872 44 874 46 874 48 871 49 870 48ZM822 27 818 31 818 34 817 35 818 43 819 44 819 51 824 51 824 48 827 42 828 43 832 43 834 40 834 37 832 35 828 35 825 37 823 43 822 44 821 43 821 33 825 29 828 28 833 29 837 34 837 51 840 51 840 33 838 29 833 26 824 26ZM828 38 831 37 832 40 829 41ZM802 26 802 48 804 51 808 51 810 50 811 46 809 43 806 43 805 42 805 26ZM807 44 809 46 808 49 805 48 805 46ZM788 26 788 48 789 50 791 51 795 51 797 49 797 45 795 43 792 43 791 42 791 26ZM793 44 795 45 795 48 794 49 791 48 791 46ZM774 26 770 26 768 28 768 33 773 35 773 47 770 49 766 46 765 37 761 36 763 47 764 49 767 51 773 51 776 49 776 46 777 45 777 32 776 31 776 28ZM769 30 771 28 774 30 772 32ZM739 27 735 32 737 33 743 28 747 29 749 31 750 34 750 51 753 51 753 33 752 30 747 26 741 26ZM706 26 703 30 705 34 708 34 709 35 709 51 727 51 727 26 724 26 724 48 723 49 714 49 712 47 712 28 710 26ZM705 30 707 28 710 30 708 32ZM692 26 688 26 686 28 686 33 691 35 691 47 688 49 684 46 683 37 679 36 681 47 682 49 685 51 691 51 694 49 694 46 695 45 695 32 694 31 694 28ZM687 30 689 28 692 30 690 32ZM654 28 652 31 662 28 668 31 669 42 668 43 665 43 663 45 663 49 665 51 670 51 672 47 672 33 671 30 666 26 658 26ZM665 48 666 45 669 46 667 49ZM621 27 618 31 618 36 619 38 623 39 626 37 626 32 623 30 626 28 629 29 631 32 631 34 628 37 628 51 643 51 643 26 640 26 640 47 638 49 633 49 631 47 631 37 634 34 633 29 629 26 623 26ZM620 34 623 33 625 35 622 37ZM604 26 604 48 606 51 610 51 612 50 613 46 611 43 608 43 607 42 607 26ZM609 44 611 46 610 49 607 48 607 46ZM590 26 590 48 591 50 593 51 597 51 599 49 599 45 597 43 594 43 593 42 593 26ZM595 44 597 45 597 48 596 49 593 48 593 46ZM450 28 447 32 447 33 451 36 448 40 448 51 451 51 451 41 454 37 451 32 454 29 457 28 458 29 461 29 464 32 464 36 465 37 465 51 468 51 468 35 466 29 461 26 454 26ZM413 26 411 28 411 32 412 34 415 34 416 35 416 51 434 51 434 41 437 38 438 34 435 34 434 33 434 26 431 26 431 35 430 36 428 34 425 35 425 40 431 43 431 48 430 49 421 49 420 48 420 31 417 26ZM429 39 430 38 431 39 430 40ZM426 36 428 35 429 37 427 38ZM413 29 415 28 417 31 414 32ZM396 26 396 49 398 51 402 51 404 49 404 45 403 43 400 43 399 42 399 26ZM399 45 401 44 403 46 403 48 400 49 399 48ZM366 29 364 33 368 36 366 38 365 42 360 44 359 46 360 50 366 51 368 49 368 41 371 37 368 32 371 29 378 29 381 32 381 35 382 36 382 51 385 51 385 35 383 29 378 26 371 26ZM361 47 363 45 365 46 364 49ZM339 27 335 32 337 33 343 28 347 29 349 31 350 34 350 51 353 51 353 33 352 30 347 26 341 26ZM302 26 300 29 300 31 302 34 305 34 306 35 306 51 310 51 318 46 320 47 320 49 322 51 326 51 328 48 328 45 327 43 323 40 323 26 320 26 320 42 311 47 309 46 309 29 307 26ZM324 44 326 47 324 49 323 48 323 45ZM302 29 305 28 306 31 303 32ZM274 27 270 31 271 32 276 29 279 29 280 28 284 29 287 32 287 47 286 48 283 48 281 45 281 37 279 35 275 35 273 37 273 41 278 44 279 49 281 51 287 51 289 50 290 48 290 31 289 29 285 26 277 26ZM275 40 276 37 279 39 277 41ZM229 31 228 33 232 36 229 41 229 47 232 51 236 51 238 49 238 45 236 43 233 43 232 42 235 37 235 35 233 34 232 32 235 29 238 28 242 29 246 34 246 51 262 51 262 26 259 26 259 47 257 49 251 49 249 47 249 33 248 30 243 26 235 26ZM232 46 235 45 236 48 233 49ZM207 27 203 32 205 33 211 28 215 29 217 31 218 34 218 51 221 51 221 33 220 30 215 26 209 26ZM176 28 173 32 173 33 177 36 174 40 174 51 177 51 177 41 180 37 177 32 180 29 183 28 184 29 187 29 190 32 190 36 191 37 191 51 194 51 194 35 192 29 187 26 180 26ZM133 27 128 32 128 33 132 36 129 40 129 48 132 51 136 51 138 48 138 45 136 43 133 43 132 42 135 37 132 32 135 29 138 28 139 29 142 29 145 32 146 35 146 51 149 51 149 34 147 29 142 26 135 26ZM132 46 135 45 136 48 133 49ZM552 20 550 21 546 26 546 29 548 33 551 35 546 39 546 47 551 51 558 52 563 50 566 47 567 44 565 37 561 35 565 32 566 26 565 23 560 20ZM550 39 554 36 560 37 563 40 563 45 562 47 559 49 553 49 549 44ZM554 22 558 22 562 25 562 30 557 34 553 33 550 30 550 26 551 24ZM525 20 520 24 518 29 518 42 520 47 524 51 530 52 533 51 538 46 539 43 539 29 537 24 532 20ZM526 23 532 23 535 27 535 31 536 32 535 44 531 49 525 48 522 43 522 37 521 36 522 34 522 28ZM498 20 494 22 492 25 491 32 490 33 490 39 493 48 499 52 503 52 506 51 511 44 512 31 511 30 511 27 507 21 505 20ZM498 23 504 23 507 26 508 29 508 42 506 47 503 49 499 49 495 45 494 42 494 30 496 25ZM86 20 86 34 85 36 86 37 89 37 94 34 99 35 102 39 102 44 101 46 97 49 92 49 88 44 85 45 85 47 88 50 93 52 100 51 104 48 106 43 106 39 104 35 100 32 92 32 90 33 89 32 89 25 91 23 104 23 104 20ZM64 20 61 21 58 24 57 27 58 28 61 28 61 26 64 23 71 23 73 25 74 28 73 31 69 34 65 34 64 36 65 37 70 37 74 40 74 46 70 49 65 49 63 48 60 43 57 44 57 46 60 50 69 52 75 50 78 46 78 40 72 35 77 31 77 25 76 23 72 20ZM36 20 31 23 30 27 33 28 36 23 43 23 46 27 46 30 41 34 37 34 37 37 42 37 46 40 47 44 46 46 42 49 36 48 32 43 29 44 31 49 34 51 41 52 47 50 50 47 50 40 49 38 45 35 48 33 49 31 49 24 44 20ZM11 20 4 25 4 28 10 24 11 25 11 47 10 48 4 48 3 51 23 51 22 48 16 48 15 47 15 20ZM365 20 365 21 373 21 374 22 385 23 383 18 378 15 371 15ZM370 19 372 17 378 17 381 20 379 21 378 20 371 20Z"/></svg>
<div class="in" style="left:288px;top:477px;width:235px;height:30px"></div>
<svg style="position:absolute;left:293.5px;top:483.0px;overflow:visible" width="1" height="1"><path transform="scale(.25)" fill="#000" stroke="#000" stroke-width="0.9" stroke-linejoin="round" fill-rule="evenodd" d="M50 58 48 60 49 64 52 64 53 65 53 68 55 68 55 60 53 58ZM50 60 52 59 53 62 51 63ZM135 28 133 31 133 35 135 37 138 37 139 38 139 55 143 55 144 54 148 39 150 37 156 55 161 55 161 29 157 29 157 45 156 46 155 45 152 34 150 30 149 30 145 44 143 47 142 46 142 30 140 28ZM137 30 139 31 139 34 138 35 135 34 135 32ZM101 31 102 35 104 37 107 37 108 38 108 55 112 55 113 54 113 52 118 43 118 41 124 31 126 34 126 55 129 55 129 31 128 29 122 28 120 30 112 47 111 46 111 32 108 28 104 28ZM103 32 106 30 108 33 105 35ZM88 28 88 52 90 55 95 55 97 53 97 48 95 46 92 46 91 45 91 28ZM91 49 94 48 96 51 94 53 92 53 91 52ZM77 28 73 28 71 30 71 36 77 38 77 49 75 52 71 52 69 50 68 42 67 40 64 39 64 44 65 45 66 52 70 55 76 55 78 54 80 51 80 31 79 29ZM72 33 74 31 77 32 75 35ZM41 28 37 31 35 34 35 37 44 38 49 41 49 45 44 48 44 53 46 55 50 55 53 51 53 41 50 37 40 34 43 31 49 31 53 33 56 33 56 30 53 30 49 28ZM48 48 50 49 50 52 49 53 46 52 46 50ZM7 30 3 35 3 36 7 39 4 46 4 55 8 55 8 43 11 39 7 35 12 31 17 31 21 34 22 36 22 55 26 55 26 38 24 32 19 28 11 28Z"/></svg>
<div class="in" style="left:672px;top:477px;width:235px;height:30px"></div>
<div class="it" style="left:677px;top:483px;">10160</div>
<div class="in" style="left:1022px;top:477px;width:183px;height:29px"></div>
<svg style="position:absolute;left:1027.5px;top:483.25px;overflow:visible" width="1" height="1"><path transform="scale(.25)" fill="#000" stroke="#000" stroke-width="0.9" stroke-linejoin="round" fill-rule="evenodd" d="M63 28 60 32 60 37 62 41 64 42 61 45 61 55 80 55 80 28 77 28 77 51 76 52 65 52 64 51 64 45 67 43 71 43 71 41 67 41 64 38 70 36 70 30 68 28ZM66 30 68 31 68 34 67 35 64 34 64 32ZM25 31 26 35 28 37 31 37 32 38 32 55 36 55 37 54 37 52 42 43 42 41 48 31 50 34 50 55 53 55 53 31 52 29 46 28 44 30 36 47 35 46 35 32 32 28 28 28ZM27 32 30 30 32 33 29 35ZM-3 12 -2 17 1 22 6 22 9 18 9 15 10 14 12 15 12 51 14 55 19 55 21 54 22 52 21 47 16 45 16 16 15 13 13 11 8 12 6 18 3 20 1 18 0 12ZM15 50 17 48 19 48 20 49 20 52 17 53Z"/></svg>
<div class="in" style="left:288px;top:519px;width:235px;height:30px"></div>
<div class="it" style="left:293px;top:525px;">02-816-9282</div>
<div class="in" style="left:672px;top:519px;width:235px;height:30px"></div>
<div class="it" style="left:677px;top:525px;">0-2816-9283</div>
<div class="in" style="left:1022px;top:518px;width:183px;height:30px"></div>
<div class="it" style="left:1027px;top:524px;">0-2455-9280-2</div>
<div class="in" style="left:288px;top:559px;width:235px;height:30px"></div>
<div class="it" style="left:293px;top:565px;">089-532-6554</div>
<div class="in" style="left:672px;top:559px;width:235px;height:30px"></div>
<div class="it" style="left:677px;top:565px;">roj@hotmail.com</div>
<div class="in" style="left:1022px;top:564px;width:184px;height:30px"></div>
<div class="it" style="left:1027px;top:570px;">www.aristosoft.or</div>
<div class="btn" style="left:913px;top:394px;width:32px;height:33px"></div>
<div class="a a" style="left:924px;top:400px;font-size:11px">...</div>
<div style="position:absolute;left:958px;top:393px;width:302px;height:32px;background:#f0f0f0;border:1px solid #fff;border-right-color:#e0e0e0;border-bottom-color:#e0e0e0"></div>
<svg style="position:absolute;left:981.75px;top:397.0px;overflow:visible" width="1" height="1"><path transform="scale(.25)" fill="#000" stroke="#000" stroke-width="0.9" stroke-linejoin="round" fill-rule="evenodd" d="M200 31 200 55 204 55 204 38 208 33 214 33 216 35 216 55 220 55 220 35 219 33 215 30 209 30 205 33 204 31ZM176 32 174 36 177 37 180 33 186 33 189 36 189 39 184 41 178 41 173 45 173 52 178 56 185 55 188 52 189 52 191 55 197 55 197 53 195 53 193 51 193 35 192 33 187 30 180 30ZM176 49 177 46 180 43 188 43 189 44 189 48 183 53 179 53ZM67 29 64 32 64 38 67 42 64 47 64 55 83 55 83 29 80 29 80 51 79 52 69 52 68 51 68 45 74 43 74 41 70 41 68 39 74 36 74 32 72 29ZM68 32 70 31 72 34 69 36 68 35ZM36 33 35 35 36 36 42 32 47 32 50 35 50 55 54 55 54 36 53 33 48 29 41 29ZM30 28 26 28 26 30 23 33 20 34 14 29 8 29 4 32 3 34 3 39 5 42 10 42 12 39 12 36 8 33 9 32 13 32 16 35 16 37 13 42 13 55 28 55 28 41 27 38 24 35 28 33 30 30ZM20 37 24 40 24 51 23 52 18 52 17 51 17 40ZM5 38 7 36 10 37 9 40 7 40ZM134 23 134 55 138 55 138 31 139 30 149 55 152 55 156 43 158 40 159 35 162 30 163 31 163 55 166 55 166 23 161 23 160 24 160 26 158 29 157 34 151 48 150 48 148 45 147 40 145 37 144 32 140 23ZM238 21 244 31 245 38 246 39 245 52 241 61 238 64 238 65 241 65 244 62 248 55 250 42 249 41 249 35 246 27 241 21ZM112 21 107 28 105 33 104 49 106 56 112 65 116 65 112 60 108 50 108 36 112 26 116 21Z"/></svg>
<svg style="position:absolute;left:1106.5px;top:397.0px;overflow:visible" width="1" height="1"><path transform="scale(.25)" fill="#000" stroke="#000" stroke-width="0.9" stroke-linejoin="round" fill-rule="evenodd" d="M54 63 57 66 64 66 69 63 71 57 68 57 67 61 63 64 60 63 61 62 61 59 59 57 56 57 54 59ZM56 59 58 58 60 61 57 62ZM293 29 289 31 286 35 286 38 285 39 286 49 287 51 292 55 295 56 302 55 304 54 307 50 304 49 299 53 295 53 290 49 289 44 290 43 308 43 307 35 303 30ZM289 39 291 34 294 32 300 32 304 37 303 40 290 40ZM251 30 249 32 248 36 252 36 252 34 255 32 261 32 264 36 264 39 263 40 253 40 250 41 247 44 247 47 246 48 248 54 253 56 259 55 263 51 266 55 271 55 272 54 268 52 268 37 266 32 262 29 254 29ZM263 42 264 43 264 46 261 51 257 53 253 53 251 51 250 47 253 43ZM206 29 206 55 210 55 210 37 214 32 219 32 221 35 221 55 225 55 225 38 226 35 229 32 234 32 236 34 236 38 237 39 237 55 240 55 240 33 238 30 236 29 230 29 225 33 221 29 215 29 211 32 209 29ZM182 30 177 37 177 47 178 50 183 55 186 55 187 56 196 54 199 50 196 49 191 53 187 53 182 49 181 44 182 43 200 43 200 39 198 33 192 29ZM181 37 185 32 192 32 194 34 196 39 195 40 182 40ZM93 28 89 28 87 30 87 36 93 38 93 49 91 52 87 52 85 50 84 42 83 40 80 39 80 44 81 45 82 52 86 55 92 55 94 54 96 51 96 31 95 29ZM88 33 90 31 93 32 91 35ZM34 35 34 36 36 36 39 39 36 42 36 53 38 55 43 55 45 53 45 48 43 46 40 46 39 45 39 43 42 40 42 38 38 35 43 31 49 31 53 35 53 38 54 39 54 55 71 55 71 28 68 28 67 29 67 51 66 52 58 52 57 51 57 36 56 33 52 29 50 28 42 28 37 31ZM39 49 41 48 43 51 40 53 39 52ZM3 29 2 31 3 36 8 38 8 55 13 55 14 51 18 44 23 39 25 40 25 55 28 55 28 39 26 37 28 35 28 30 26 28 21 28 19 30 19 35 21 37 16 42 12 50 11 49 11 30 9 28ZM21 32 24 30 26 33 23 35ZM4 32 7 30 9 33 6 35ZM172 21 149 21 148 22 148 55 152 55 152 42 153 41 172 41 172 38 153 38 152 37 152 26 153 25 172 25ZM326 20 332 30 333 38 334 39 333 52 329 61 326 64 326 65 329 65 332 62 336 55 338 40 337 39 336 30 334 26 329 20ZM275 20 275 55 279 55 279 20ZM125 20 118 32 118 35 117 36 117 49 119 56 125 65 129 65 125 60 121 49 121 36 122 35 122 32 125 25 129 20ZM49 22 49 23 54 23 55 24 71 25 68 19 63 16 56 16 52 18ZM54 21 57 18 62 18 67 22 65 23 64 22 55 22Z"/></svg>
<div style="position:absolute;left:34px;top:631px;width:13px;height:13px;border:1px solid #8f8f8f;background:linear-gradient(135deg,#dcdcdc,#ffffff);box-shadow:inset 0 0 0 1px #f4f4f4"></div>
<svg style="position:absolute;left:50.5px;top:630.0px;overflow:visible" width="1" height="1"><path transform="scale(.25)" fill="#0000ff" stroke="#0000ff" stroke-width="0.9" stroke-linejoin="round" fill-rule="evenodd" d="M508 26 506 29 506 35 509 39 506 42 506 51 524 51 524 26 521 26 521 48 520 49 511 49 509 47 509 43 512 40 515 40 516 38 513 38 509 35 515 33 515 28 513 26ZM509 30 511 28 513 29 512 32ZM487 27 483 32 485 33 491 28 495 29 497 31 498 34 498 51 501 51 501 33 500 30 495 26 489 26ZM452 27 451 30 452 33 457 35 457 41 453 44 453 49 455 51 459 51 460 50 460 47 462 46 470 51 474 51 474 26 471 26 471 47 470 48 460 42 460 28 458 26ZM456 44 457 45 457 48 456 49 455 48 455 45ZM453 30 455 28 457 29 456 32ZM423 26 421 28 421 32 426 35 426 51 431 51 433 45 440 36 442 37 442 51 445 51 445 36 443 34 445 32 445 28 443 26 438 26 437 27 436 32 438 34 430 45 429 44 429 28 427 26ZM438 30 440 28 443 30 441 32ZM423 29 426 28 427 31 424 32ZM399 28 396 33 396 40 397 41 398 51 404 50 409 43 409 36 407 35 403 35 400 40 399 39 399 34 403 29 406 29 407 28 409 28 414 31 416 37 416 51 419 51 419 35 418 34 418 31 412 26 403 26ZM401 40 402 42 405 44 403 47 402 47 400 44 400 41ZM403 38 406 37 407 40 404 41ZM373 27 369 31 370 32 375 29 378 29 379 28 383 29 386 32 386 47 385 48 382 48 380 45 380 37 378 35 374 35 372 37 372 41 377 44 378 49 380 51 386 51 388 50 389 48 389 31 388 29 384 26 376 26ZM374 40 375 37 378 39 376 41ZM361 26 357 26 355 28 355 33 360 35 360 47 357 49 353 46 352 37 348 36 350 47 351 49 354 51 360 51 363 49 363 46 364 45 364 32 363 31 363 28ZM356 30 358 28 361 30 359 32ZM323 28 322 31 331 28 334 29 338 33 338 47 336 49 327 49 326 48 326 44 327 43 330 43 332 39 330 35 325 35 323 38 323 51 341 51 341 32 340 30 335 26 327 26ZM326 40 327 37 330 39 328 41ZM261 26 259 28 259 32 261 34 264 34 265 35 265 51 268 51 269 50 272 41 272 38 274 34 276 36 276 39 280 51 284 51 284 27 281 27 281 41 280 42 279 41 275 28 274 28 269 42 268 41 268 30 265 26ZM261 29 264 28 265 31 262 32ZM231 27 230 30 231 33 236 35 236 41 232 44 232 49 234 51 238 51 239 50 239 47 241 46 249 51 253 51 253 26 250 26 250 47 249 48 239 42 239 28 237 26ZM235 44 236 45 236 48 235 49 234 48 234 45ZM232 30 234 28 236 29 235 32ZM177 33 177 34 189 36 191 38 191 42 190 43 187 43 186 45 186 49 188 51 192 51 194 49 194 37 191 34 185 33 183 31 184 29 187 28 192 30 197 30 198 28 199 29 199 32 201 34 204 34 205 35 205 51 208 51 209 50 212 41 212 38 214 34 216 36 216 39 220 51 224 51 224 27 221 27 221 41 220 42 216 33 215 28 213 29 213 32 209 42 208 41 208 30 205 26 201 26 199 28 195 28 191 26 184 26 182 27ZM188 46 191 45 192 48 189 49ZM201 29 204 28 205 31 202 32ZM160 27 156 32 158 33 164 28 168 29 170 31 171 34 171 51 174 51 174 33 173 30 168 26 162 26ZM133 28 130 32 130 33 134 36 131 40 131 51 134 51 134 41 137 37 134 32 137 29 140 28 141 29 144 29 147 32 147 36 148 37 148 51 151 51 151 35 149 29 144 26 137 26ZM121 26 117 26 115 28 115 33 120 35 120 47 117 49 113 46 112 37 108 36 110 47 111 49 114 51 120 51 123 49 123 46 124 45 124 32 123 31 123 28ZM116 30 118 28 121 30 119 32ZM84 28 83 31 92 28 95 29 99 33 99 47 97 49 88 49 87 48 87 44 88 43 91 43 93 39 91 35 86 35 84 38 84 51 102 51 102 32 101 30 96 26 88 26ZM87 40 88 37 91 39 89 41ZM58 28 55 33 57 51 63 50 68 43 68 40 69 39 68 36 63 35 60 40 58 38 59 32 63 29 65 31 68 31 71 29 75 34 75 51 78 51 78 33 77 30 72 26 70 26 68 28 66 28 63 26ZM60 40 61 42 64 44 61 47 59 43ZM62 39 64 37 66 38 65 41 63 41ZM25 27 24 30 25 33 30 35 30 41 26 44 26 49 28 51 32 51 33 50 33 47 35 46 43 51 47 51 47 26 44 26 44 47 43 48 33 42 33 28 31 26ZM29 44 30 45 30 48 29 49 28 48 28 45ZM26 30 28 28 30 29 29 32ZM317 25 314 25 313 27 308 31 307 31 303 26 301 26 299 28 296 26 294 26 290 30 289 36 290 38 293 40 297 39 298 37 297 32 302 29 303 30 304 34 301 37 301 51 315 51 315 38 314 35 311 32 316 28ZM307 34 311 37 311 48 310 49 306 49 304 47 304 37ZM294 33 296 35 294 38 292 36ZM294 30 295 29 298 31 295 32ZM47 17 47 22 50 22 50 17ZM205 20 205 21 213 21 214 22 225 23 223 18 218 15 211 15ZM210 19 212 17 218 17 221 20 219 21 218 20 211 20ZM61 17 62 19 65 20 63 23 67 23 72 21 77 16 77 14 75 14 74 16 69 20 67 14 63 14ZM63 16 65 15 66 17 64 18ZM287 12 284 12 282 14 276 15 274 17 274 21 276 23 281 23 282 22 282 18 281 17 286 14ZM278 17 280 18 280 21 279 22 276 21 276 19ZM-3 12 -1 19 1 21 6 21 8 18 8 15 10 13 11 14 11 47 12 50 18 51 20 49 20 45 18 43 15 43 14 42 14 12 13 11 8 11 6 14 6 17 4 19 1 17 0 12ZM16 44 18 45 18 48 17 49 14 48 14 46Z"/></svg>
<svg style="position:absolute;left:283.5px;top:629.0px;overflow:visible" width="1" height="1"><path transform="scale(.25)" fill="#ff0000" stroke="#ff0000" stroke-width="0.9" stroke-linejoin="round" fill-rule="evenodd" d="M93 41 93 43 114 43 114 41ZM93 29 93 32 114 32 114 29ZM404 26 402 28 402 32 403 34 406 34 407 35 407 51 425 51 425 41 428 38 429 34 426 34 425 33 425 26 422 26 422 35 421 36 419 34 416 35 416 40 422 43 422 48 421 49 412 49 411 48 411 31 408 26ZM420 39 421 38 422 39 421 40ZM417 36 419 35 420 37 418 38ZM404 29 406 28 408 31 405 32ZM362 26 362 49 364 51 368 51 370 49 370 45 369 43 366 43 365 42 365 26ZM365 45 367 44 369 46 369 48 366 49 365 48ZM330 26 328 28 328 32 330 34 333 34 334 35 334 51 337 51 338 50 341 41 341 38 343 34 345 36 345 39 349 51 353 51 353 27 350 27 350 41 349 42 348 41 344 28 343 28 338 42 337 41 337 30 334 26ZM330 29 333 28 334 31 331 32ZM304 26 301 30 303 34 306 34 307 35 307 51 325 51 325 26 322 26 322 48 321 49 312 49 310 47 310 28 308 26ZM303 30 305 28 308 30 306 32ZM277 26 274 30 276 34 279 34 280 35 280 51 298 51 298 26 295 26 295 48 294 49 285 49 283 47 283 28 281 26ZM276 30 278 28 281 30 279 32ZM263 26 263 48 265 51 269 51 271 50 272 46 270 43 267 43 266 42 266 26ZM268 44 270 46 269 49 266 48 266 46ZM249 26 249 48 250 50 252 51 256 51 258 49 258 45 256 43 253 43 252 42 252 26ZM254 44 256 45 256 48 255 49 252 48 252 46ZM229 27 225 32 227 33 233 28 237 29 239 31 240 34 240 51 243 51 243 33 242 30 237 26 231 26ZM195 26 193 28 193 32 198 35 198 51 203 51 205 45 212 36 214 37 214 51 217 51 217 36 215 34 217 32 217 28 215 26 210 26 209 27 208 32 210 34 202 45 201 44 201 28 199 26ZM210 30 212 28 215 30 213 32ZM195 29 198 28 199 31 196 32ZM164 26 162 29 162 31 164 34 167 34 168 35 168 51 172 51 180 46 182 47 182 49 184 51 188 51 190 48 190 45 189 43 185 40 185 26 182 26 182 42 173 47 171 46 171 29 169 26ZM186 44 188 47 186 49 185 48 185 45ZM164 29 167 28 168 31 165 32ZM137 27 133 31 133 34 132 35 133 43 134 44 134 51 139 51 139 48 142 42 143 43 147 43 149 40 149 37 147 35 143 35 140 37 138 43 137 44 136 43 136 33 140 29 143 28 148 29 152 34 152 51 155 51 155 33 153 29 148 26 139 26ZM143 38 146 37 147 40 144 41ZM401 24 397 24 394 27 391 26 382 26 377 29 375 33 375 40 377 46 377 51 381 51 383 44 385 42 386 43 389 43 392 39 391 36 385 35 382 38 380 43 378 41 379 32 381 30 386 28 390 29 394 33 395 36 395 51 398 51 398 35 397 34 397 30ZM386 40 387 37 390 39 388 41ZM62 20 60 21 56 26 56 34 57 36 61 40 68 40 72 37 73 38 73 41 71 46 67 49 63 49 60 45 57 45 57 47 60 51 66 52 71 50 76 43 76 28 73 22 69 20ZM63 23 69 23 72 27 72 30 73 31 72 34 67 38 64 38 60 34 59 31 60 26ZM52 20 30 20 30 51 34 51 34 39 35 38 52 38 52 36 35 36 34 35 34 24 35 23 52 23ZM444 19 445 21 447 21 449 23 449 33 450 34 450 37 452 39 449 46 449 57 446 59 444 59 445 61 448 61 450 60 453 56 453 44 457 41 458 39 453 36 453 23 450 19ZM8 19 5 24 5 36 3 38 1 38 1 41 3 41 5 43 5 55 6 58 10 61 14 61 14 59 12 59 9 56 9 44 6 40 9 35 9 23 11 21 14 21 14 19ZM334 20 334 21 342 21 343 22 354 23 352 18 347 15 340 15ZM339 19 341 17 347 17 350 20 348 21 347 20 340 20ZM142 17 143 19 146 20 144 23 148 23 153 21 158 16 158 14 156 14 155 16 150 20 148 14 144 14ZM144 16 146 15 147 17 145 18Z"/></svg>
<div class="btn" style="left:35px;top:667px;width:155px;height:58px"></div>
<svg style="position:absolute;left:34.75px;top:705.25px;overflow:visible" width="1" height="1"><path transform="scale(.25)" fill="#000" stroke="#000" stroke-width="0.9" stroke-linejoin="round" fill-rule="evenodd" d="M405 31 406 35 408 37 411 37 412 38 412 55 416 55 417 54 417 52 422 43 422 41 428 31 430 34 430 55 433 55 433 31 432 29 426 28 424 30 416 47 415 46 415 32 412 28 408 28ZM407 32 410 30 412 33 409 35ZM375 28 373 30 373 35 375 37 378 37 379 38 379 55 399 55 399 43 402 39 402 37 399 36 399 29 398 28 395 28 395 39 394 40 393 38 391 37 388 39 389 44 395 46 395 51 394 52 383 52 382 51 382 30 380 28ZM393 41 394 40 395 42 394 43ZM389 39 391 38 393 40 391 42ZM377 30 379 31 379 34 378 35 375 34 375 32ZM353 28 349 31 347 34 347 37 356 38 361 41 361 45 356 48 356 53 358 55 362 55 365 51 365 41 362 37 352 34 355 31 361 31 365 33 368 33 368 30 365 30 361 28ZM360 48 362 49 362 52 361 53 358 52 358 50ZM316 28 314 30 314 35 316 37 319 37 320 38 320 55 339 55 339 28 336 28 336 51 335 52 324 52 323 51 323 31 322 29 320 28ZM318 30 320 32 319 35 316 34 316 32ZM291 29 287 35 290 35 295 31 299 31 302 33 303 35 303 55 307 55 307 37 306 36 306 33 304 30 300 28 293 28ZM255 29 254 31 255 36 260 38 260 55 265 55 266 51 270 44 275 39 277 40 277 55 280 55 280 39 278 37 280 35 280 30 278 28 273 28 271 30 271 35 273 37 268 42 264 50 263 49 263 30 261 28ZM273 32 276 30 278 33 275 35ZM256 32 259 30 261 33 258 35ZM221 28 219 30 219 35 221 37 224 37 225 38 225 55 229 55 239 49 240 50 240 53 242 55 246 55 248 53 248 47 243 43 243 28 240 28 240 45 238 47 229 51 228 50 228 31 225 28ZM244 47 246 49 246 52 245 53 243 52 243 48ZM220 32 223 30 225 33 222 35ZM193 29 188 35 188 45 189 46 190 55 194 55 196 48 198 46 203 47 206 43 205 39 199 38 195 42 194 47 193 48 192 47 191 37 192 35 197 31 203 31 208 35 209 37 209 55 212 55 212 35 211 33 205 28 195 28ZM199 42 202 40 204 43 201 45ZM385 20 387 24 389 25 397 25 402 21 403 16 401 16 399 21 396 23 393 23 392 22 393 18 391 16 387 16ZM387 19 389 17 391 20 388 21ZM345 22 345 23 350 23 351 24 367 25 364 19 359 16 352 16 348 18ZM350 21 353 18 358 18 363 22 361 23 360 22 351 22ZM198 25 204 24 209 21 213 16 213 14 210 14 209 17 204 21 203 20 203 16 201 14 197 14 196 15 196 19 200 21ZM202 21 203 20 204 21 203 22ZM197 17 199 15 201 18 199 19Z"/></svg>
<div class="btn" style="left:195px;top:667px;width:144px;height:58px"></div>
<svg style="position:absolute;left:195.25px;top:705.25px;overflow:visible" width="1" height="1"><path transform="scale(.25)" fill="#000" stroke="#000" stroke-width="0.9" stroke-linejoin="round" fill-rule="evenodd" d="M404 30 402 32 403 34 408 31 414 31 419 35 420 38 420 51 419 52 408 52 407 51 407 48 408 47 411 47 413 44 413 42 410 38 406 38 403 42 403 55 423 55 423 35 421 31 416 28 408 28ZM406 42 409 40 411 43 408 45ZM339 28 337 30 337 35 339 37 342 37 343 38 343 44 340 45 338 48 339 54 340 55 344 55 346 53 346 50 347 49 357 55 361 55 361 28 358 28 358 50 357 51 348 47 346 45 346 31 345 29 343 28ZM342 47 343 48 343 52 341 53 340 52 340 49ZM341 30 343 32 342 35 339 34 339 32ZM313 29 309 35 312 35 317 31 321 31 324 33 325 35 325 55 329 55 329 37 328 36 328 33 326 30 322 28 315 28ZM279 32 277 37 278 46 279 47 279 55 284 55 287 53 292 45 292 41 290 38 284 39 283 43 287 48 284 51 283 50 281 44 281 36 284 32 287 32 289 34 295 32 298 34 299 37 299 55 302 55 302 35 300 31 296 28 294 28 290 31 286 28 284 28ZM287 40 290 42 288 45 285 44 285 42ZM253 29 249 35 252 35 257 31 261 31 264 33 265 35 265 55 269 55 269 37 268 36 268 33 266 30 262 28 255 28ZM217 29 216 31 217 36 222 38 222 55 227 55 228 51 232 44 237 39 239 40 239 55 242 55 242 39 240 37 242 35 242 30 240 28 235 28 233 30 233 35 235 37 230 42 226 50 225 49 225 30 223 28ZM235 32 238 30 240 33 237 35ZM218 32 221 30 223 33 220 35ZM183 28 181 30 181 35 183 37 186 37 187 38 187 55 191 55 201 49 202 50 202 53 204 55 208 55 210 53 210 47 205 43 205 28 202 28 202 45 200 47 191 51 190 50 190 31 187 28ZM206 47 208 49 208 52 207 53 205 52 205 48ZM182 32 185 30 187 33 184 35ZM155 29 150 35 150 45 151 46 152 55 156 55 158 48 160 46 165 47 168 43 167 39 161 38 157 42 156 47 155 48 154 47 153 37 154 35 159 31 165 31 170 35 171 37 171 55 174 55 174 35 173 33 167 28 157 28ZM161 42 164 40 166 43 163 45ZM397 27 394 27 393 29 388 33 386 33 381 28 374 28 371 30 369 34 369 39 370 41 372 42 376 42 378 40 378 35 375 33 376 31 381 32 383 35 380 40 380 55 395 55 395 41 394 38 391 35 396 31ZM386 37 388 37 391 40 391 51 390 52 384 52 383 51 383 41ZM372 36 374 35 376 38 373 40 372 39ZM393 14 390 14 390 17 389 18 387 17 387 14 384 14 383 16 378 16 373 19 371 23 393 25ZM377 21 382 18 387 21 386 22 378 22ZM160 25 166 24 171 21 175 16 175 14 172 14 171 17 166 21 165 20 165 16 163 14 159 14 158 15 158 19 162 21ZM164 21 165 20 166 21 165 22ZM159 17 161 15 163 18 161 19ZM386 5 386 11 388 11 389 10 389 5Z"/></svg>
<div class="btn" style="left:363px;top:669px;width:68px;height:56px"></div>
<div class="bl" style="left:363px;top:705px;width:68px;color:#000"><span class="u">T</span>op</div>
<div class="btn" style="left:432px;top:669px;width:71px;height:56px"></div>
<div class="bl" style="left:432px;top:705px;width:71px;color:#000"><span class="u">P</span>rev</div>
<div class="btn" style="left:507px;top:668px;width:71px;height:56px"></div>
<div class="bl" style="left:507px;top:705px;width:71px;color:#000"><span class="u">N</span>ext</div>
<div class="btn" style="left:580px;top:668px;width:66px;height:56px"></div>
<div class="bl" style="left:580px;top:705px;width:66px;color:#000"><span class="u">B</span>ottom</div>
<div class="btn" style="left:650px;top:668px;width:72px;height:55px"></div>
<div class="bl" style="left:650px;top:704px;width:72px;color:#000"><span class="u">F</span>ind</div>
<div class="btn" style="left:727px;top:667px;width:72px;height:55px;border-color:#3c9ee0;box-shadow:inset 0 0 0 1px #a8d8f8"></div>
<div style="position:absolute;left:730px;top:670px;width:66px;height:49px;border:1px dotted #000"></div>
<div class="bl" style="left:727px;top:703px;width:72px;color:#000"><span class="u">A</span>dd</div>
<div class="btn" style="left:802px;top:665px;width:72px;height:56px"></div>
<div class="bl" style="left:802px;top:701px;width:72px;color:#000"><span class="u">E</span>dit</div>
<div class="btn" style="left:876px;top:665px;width:71px;height:56px"></div>
<div class="bl" style="left:876px;top:701px;width:71px;color:#000"><span class="u">D</span>elete</div>
<div class="btn" style="left:950px;top:665px;width:80px;height:57px;border-color:#b8b8b8;background:#f4f4f4;box-shadow:none"></div>
<div class="bl" style="left:950px;top:703px;width:80px;color:#8c8c8c"><span class="u">S</span>ave</div>
<div class="btn" style="left:1034px;top:664px;width:76px;height:57px;border-color:#b8b8b8;background:#f4f4f4;box-shadow:none"></div>
<div class="bl" style="left:1034px;top:701px;width:76px;color:#8c8c8c"><span class="u">C</span>ancel</div>
<div class="btn" style="left:1114px;top:664px;width:76px;height:57px"></div>
<div class="bl" style="left:1114px;top:701px;width:76px;color:#000"><span class="u">R</span>eport</div>
<div class="btn" style="left:1192px;top:664px;width:69px;height:57px"></div>
<div class="bl" style="left:1192px;top:701px;width:69px;color:#000"><span class="u">Q</span>uit</div>
<svg style="position:absolute;left:0;top:0" width="1359" height="728" viewBox="0 0 1359 728"><defs><linearGradient id="gBlue" x1="0" y1="0" x2="1" y2="1"><stop offset="0" stop-color="#2a78d8"/><stop offset="1" stop-color="#7fb0f0"/></linearGradient><linearGradient id="gOrange" x1="0" y1="0" x2="1" y2="0"><stop offset="0" stop-color="#f8a848"/><stop offset="1" stop-color="#e05020"/></linearGradient><linearGradient id="gClose" x1="0" y1="0" x2="0" y2="1"><stop offset="0" stop-color="#d4e6f8"/><stop offset="0.5" stop-color="#c4dbf2"/><stop offset="0.5" stop-color="#b2cce8"/><stop offset="1" stop-color="#bcd4ee"/></linearGradient><linearGradient id="gRed" x1="0" y1="0" x2="0" y2="1"><stop offset="0" stop-color="#ecb4a4"/><stop offset="0.45" stop-color="#e0988a"/><stop offset="0.5" stop-color="#c44424"/><stop offset="1" stop-color="#dc7c64"/></linearGradient><linearGradient id="gBody" x1="0" y1="0" x2="0" y2="1"><stop offset="0" stop-color="#e4e4f8"/><stop offset="1" stop-color="#8a8ad0"/></linearGradient><radialGradient id="gHead" cx="0.45" cy="0.3" r="0.7"><stop offset="0" stop-color="#ffe0a8"/><stop offset="1" stop-color="#ff9a30"/></radialGradient><radialGradient id="gGlass" cx="0.45" cy="0.4" r="0.6"><stop offset="0" stop-color="#ffffff"/><stop offset="1" stop-color="#d0d0d0"/></radialGradient></defs><g transform="translate(0,0)"><ellipse cx="6.4" cy="8.7" rx="5.4" ry="2.5" transform="rotate(38 6.4 8.7)" fill="url(#gBlue)"/><ellipse cx="9.8" cy="13.8" rx="2.1" ry="3.2" transform="rotate(-25 9.8 13.8)" fill="#12a040"/><ellipse cx="14" cy="7.4" rx="3.9" ry="5" transform="rotate(12 14 7.4)" fill="url(#gOrange)"/><ellipse cx="14.2" cy="13.2" rx="2.9" ry="2.6" fill="#ffd20a"/></g><g transform="translate(3,45)"><ellipse cx="6.4" cy="8.7" rx="5.4" ry="2.5" transform="rotate(38 6.4 8.7)" fill="url(#gBlue)"/><ellipse cx="9.8" cy="13.8" rx="2.1" ry="3.2" transform="rotate(-25 9.8 13.8)" fill="#12a040"/><ellipse cx="14" cy="7.4" rx="3.9" ry="5" transform="rotate(12 14 7.4)" fill="url(#gOrange)"/><ellipse cx="14.2" cy="13.2" rx="2.9" ry="2.6" fill="#ffd20a"/></g><rect x="1327.5" y="2.5" width="30" height="16" rx="2.5" fill="url(#gClose)" stroke="#8aa2c0"/><path d="M1339.2,8 L1345.6,12.6 M1345.6,8 L1339.2,12.6" stroke="#2c3444" stroke-width="5" stroke-linecap="round"/><path d="M1339.2,8 L1345.6,12.6 M1345.6,8 L1339.2,12.6" stroke="#e6e6e6" stroke-width="2.8" stroke-linecap="round"/><rect x="1324.5" y="47.5" width="30" height="16" rx="2.5" fill="url(#gRed)" stroke="#4a1020"/><rect x="1325.5" y="48.5" width="28" height="14" rx="1.5" fill="none" stroke="#f8d8d0" stroke-opacity="0.7"/><path d="M1336.4,53.2 L1342.6,57.6 M1342.6,53.2 L1336.4,57.6" stroke="#3a3040" stroke-width="5" stroke-linecap="round"/><path d="M1336.4,53.2 L1342.6,57.6 M1342.6,53.2 L1336.4,57.6" stroke="#ffffff" stroke-width="2.8" stroke-linecap="round"/><path d="M584,116 C584,104 590,97.6 600,97.6 C610,97.6 616,104 616,116 C616,121 610,121.6 600,121.6 C590,121.6 584,121 584,116Z" fill="url(#gBody)" stroke="#a0a0d8" stroke-width="0.8"/><path d="M589,106 L592,120 M611,106 L608,120" stroke="#a8a8e0" stroke-width="2" opacity="0.6"/><path d="M597.5,103 L602.5,103 L604.5,113 L600,118.5 L595.5,113Z" fill="#7272b8"/><circle cx="600" cy="91.8" r="11.4" fill="url(#gHead)" stroke="#f0841c" stroke-width="1.3"/><line x1="117.1" y1="694" x2="128.1" y2="705.5" stroke="#24561c" stroke-width="2.6"/><line x1="122.1" y1="699.5" x2="127.89999999999999" y2="705.3" stroke="#24561c" stroke-width="5" stroke-linecap="round"/><circle cx="109.6" cy="686.1" r="10.9" fill="url(#gGlass)" stroke="#1e4e1a" stroke-width="3"/><line x1="271.2" y1="694" x2="282.2" y2="705.5" stroke="#24561c" stroke-width="2.6"/><line x1="276.2" y1="699.5" x2="282.0" y2="705.3" stroke="#24561c" stroke-width="5" stroke-linecap="round"/><circle cx="263.7" cy="686.1" r="10.9" fill="url(#gGlass)" stroke="#1e4e1a" stroke-width="3"/><defs><radialGradient id="gRad" cx="0.4" cy="0.35" r="0.7"><stop offset="0" stop-color="#8ee0ff"/><stop offset="0.45" stop-color="#2a9ae0"/><stop offset="1" stop-color="#0c4a88"/></radialGradient><linearGradient id="gRad2" x1="0" y1="0" x2="1" y2="1"><stop offset="0" stop-color="#c8d0dc"/><stop offset="1" stop-color="#f8f8f8"/></linearGradient></defs><circle cx="971" cy="407" r="5.6" fill="#f6f6f6" stroke="#a4a4a4" stroke-width="1.1"/><circle cx="971" cy="407" r="3.5" fill="url(#gRad)" stroke="#0e3a66" stroke-width="0.7"/><circle cx="1097" cy="407" r="5.6" fill="#f6f6f6" stroke="#a4a4a4" stroke-width="1.1"/><circle cx="1097" cy="407" r="4" fill="url(#gRad2)"/><rect x="391" y="684" width="2.2" height="13" fill="#000080"/><polygon points="401,684 401,697 393.8,690.5" fill="#000080"/><polygon points="471.3,684 471.3,697 463.8,690.5" fill="#000080"/><polygon points="537.8,682.8 537.8,696.4 545.3,689.6" fill="#000080"/><polygon points="609,682.6 609,696.4 616.2,689.5" fill="#000080"/><rect x="616.8" y="682.6" width="2.2" height="13.8" fill="#000080"/><rect x="679" y="682" width="12" height="7" fill="#0000ff"/><rect x="680.6" y="683.2" width="1" height="1" fill="#fff"/><rect x="683.6" y="683.2" width="1" height="1" fill="#fff"/><rect x="686.6" y="683.2" width="1" height="1" fill="#fff"/><rect x="689.6" y="683.2" width="1" height="1" fill="#fff"/><rect x="680" y="685.2" width="10" height="2.6" fill="#fff"/><rect x="681" y="686" width="2" height="1.2" fill="#000"/><rect x="684" y="686" width="2" height="1.2" fill="#000"/><rect x="687" y="686" width="2" height="1.2" fill="#000"/><path d="M678.5,688.5 L678.5,692.5 L688,692.5" stroke="#000" stroke-width="1.2" fill="none"/><rect x="679" y="689" width="8.5" height="3" fill="#fff"/><rect x="680.5" y="690" width="2" height="1.2" fill="#000"/><rect x="683.5" y="690" width="2" height="1.2" fill="#000"/><rect x="683" y="688" width="4.5" height="9" fill="#000"/><rect x="689.5" y="688" width="4.5" height="9" fill="#000"/><rect x="685" y="686" width="7" height="6" fill="#000"/><rect x="684.5" y="686" width="2" height="2" fill="#000"/><rect x="690.5" y="686" width="2.5" height="2.5" fill="#000"/><rect x="684.3" y="694.5" width="1" height="1" fill="#fff"/><rect x="692" y="694.5" width="1" height="1" fill="#fff"/><rect x="684.5" y="690" width="1" height="2" fill="#fff"/><rect x="689.5" y="690" width="1" height="2" fill="#fff"/><path d="M756.5,681.5 L764,681.5 L768,685.5 L768,693.5 L756.5,693.5Z M764,681.5 L764,685.5 L768,685.5" fill="#fff" stroke="#000" stroke-width="1"/><rect x="832" y="679" width="12" height="7" fill="#0000ff"/><rect x="833.6" y="680.2" width="1" height="1" fill="#fff"/><rect x="836.6" y="680.2" width="1" height="1" fill="#fff"/><rect x="839.6" y="680.2" width="1" height="1" fill="#fff"/><rect x="842.6" y="680.2" width="1" height="1" fill="#fff"/><rect x="833" y="682.2" width="10" height="2.6" fill="#fff"/><rect x="834" y="683" width="2" height="1.2" fill="#000"/><rect x="837" y="683" width="2" height="1.2" fill="#000"/><rect x="840" y="683" width="2" height="1.2" fill="#000"/><path d="M831.5,685.5 L831.5,689.5 L841,689.5" stroke="#000" stroke-width="1.2" fill="none"/><rect x="832" y="686" width="8.5" height="3" fill="#fff"/><rect x="833.5" y="687" width="2" height="1.2" fill="#000"/><rect x="836.5" y="687" width="2" height="1.2" fill="#000"/><line x1="843.5" y1="684.5" x2="839.2" y2="692.5" stroke="#000" stroke-width="3.2"/><line x1="843" y1="685" x2="840" y2="691" stroke="#ffff00" stroke-width="1.3"/><rect x="842.5" y="682.3" width="2.2" height="1.6" fill="#a00000"/><rect x="833" y="692" width="1.2" height="1.2" fill="#000"/><rect x="835.3" y="692" width="1.2" height="1.2" fill="#000"/><rect x="837.6" y="692" width="1.2" height="1.2" fill="#000"/><rect x="904" y="679" width="12" height="7" fill="#0000ff"/><rect x="905.6" y="680.2" width="1" height="1" fill="#fff"/><rect x="908.6" y="680.2" width="1" height="1" fill="#fff"/><rect x="911.6" y="680.2" width="1" height="1" fill="#fff"/><rect x="914.6" y="680.2" width="1" height="1" fill="#fff"/><rect x="905" y="682.2" width="10" height="2.6" fill="#fff"/><rect x="906" y="683" width="2" height="1.2" fill="#000"/><rect x="909" y="683" width="2" height="1.2" fill="#000"/><rect x="912" y="683" width="2" height="1.2" fill="#000"/><path d="M903.5,685.5 L903.5,689.5 L913,689.5" stroke="#000" stroke-width="1.2" fill="none"/><rect x="904" y="686" width="8.5" height="3" fill="#fff"/><rect x="905.5" y="687" width="2" height="1.2" fill="#000"/><rect x="908.5" y="687" width="2" height="1.2" fill="#000"/><path d="M910,684 L919,693 M918.5,685 L911,693" stroke="#ff0000" stroke-width="1.8"/><rect x="983" y="680" width="14" height="14" fill="#a0a0a0"/><rect x="985" y="681" width="9.5" height="6.5" fill="#f4f4f4" stroke="#a0a0a0" stroke-width="0"/><rect x="990.8" y="689" width="2.6" height="4" fill="#f4f4f4"/><rect x="983.5" y="681" width="1" height="12" fill="#f4f4f4" opacity="0.5"/><rect x="995.3" y="681" width="1" height="12" fill="#f4f4f4" opacity="0.5"/><path d="M1068,686.5 C1070,683.5 1074,682.5 1076.5,684.5 C1078.5,686.5 1077.5,689 1075.5,689.8" stroke="#a0a0a0" stroke-width="1.6" fill="none"/><polygon points="1066,683 1066,689.5 1072,689.5" fill="#a0a0a0"/><path d="M1147.5,678.5 L1156,678.5 L1155,683.5 L1146,683.5Z" fill="#fff" stroke="#000" stroke-width="1.2"/><line x1="1148" y1="680.5" x2="1154" y2="680.5" stroke="#000" stroke-width="0.8"/><path d="M1145,684 L1159,684 L1161,686 L1161,691 L1159,693 L1145,693 L1144,691 L1144,686Z" fill="#303030"/><rect x="1145.5" y="687" width="12" height="3.5" fill="#8c8c8c"/><rect x="1152" y="688.3" width="4" height="1.2" fill="#fff"/><path d="M1219.5,683.5 L1221.5,681.5 L1224,681.5 L1225,683.5 L1232.5,683.5 L1232.5,692 L1219.5,692Z" fill="#ffff66" stroke="#000" stroke-width="1.1"/><path d="M1233.3,682.6 L1229.4,678.7 M1229,681.3 L1229,678.3 L1232,678.3" stroke="#0000ff" stroke-width="1.2" fill="none"/></svg>
</body></html>
